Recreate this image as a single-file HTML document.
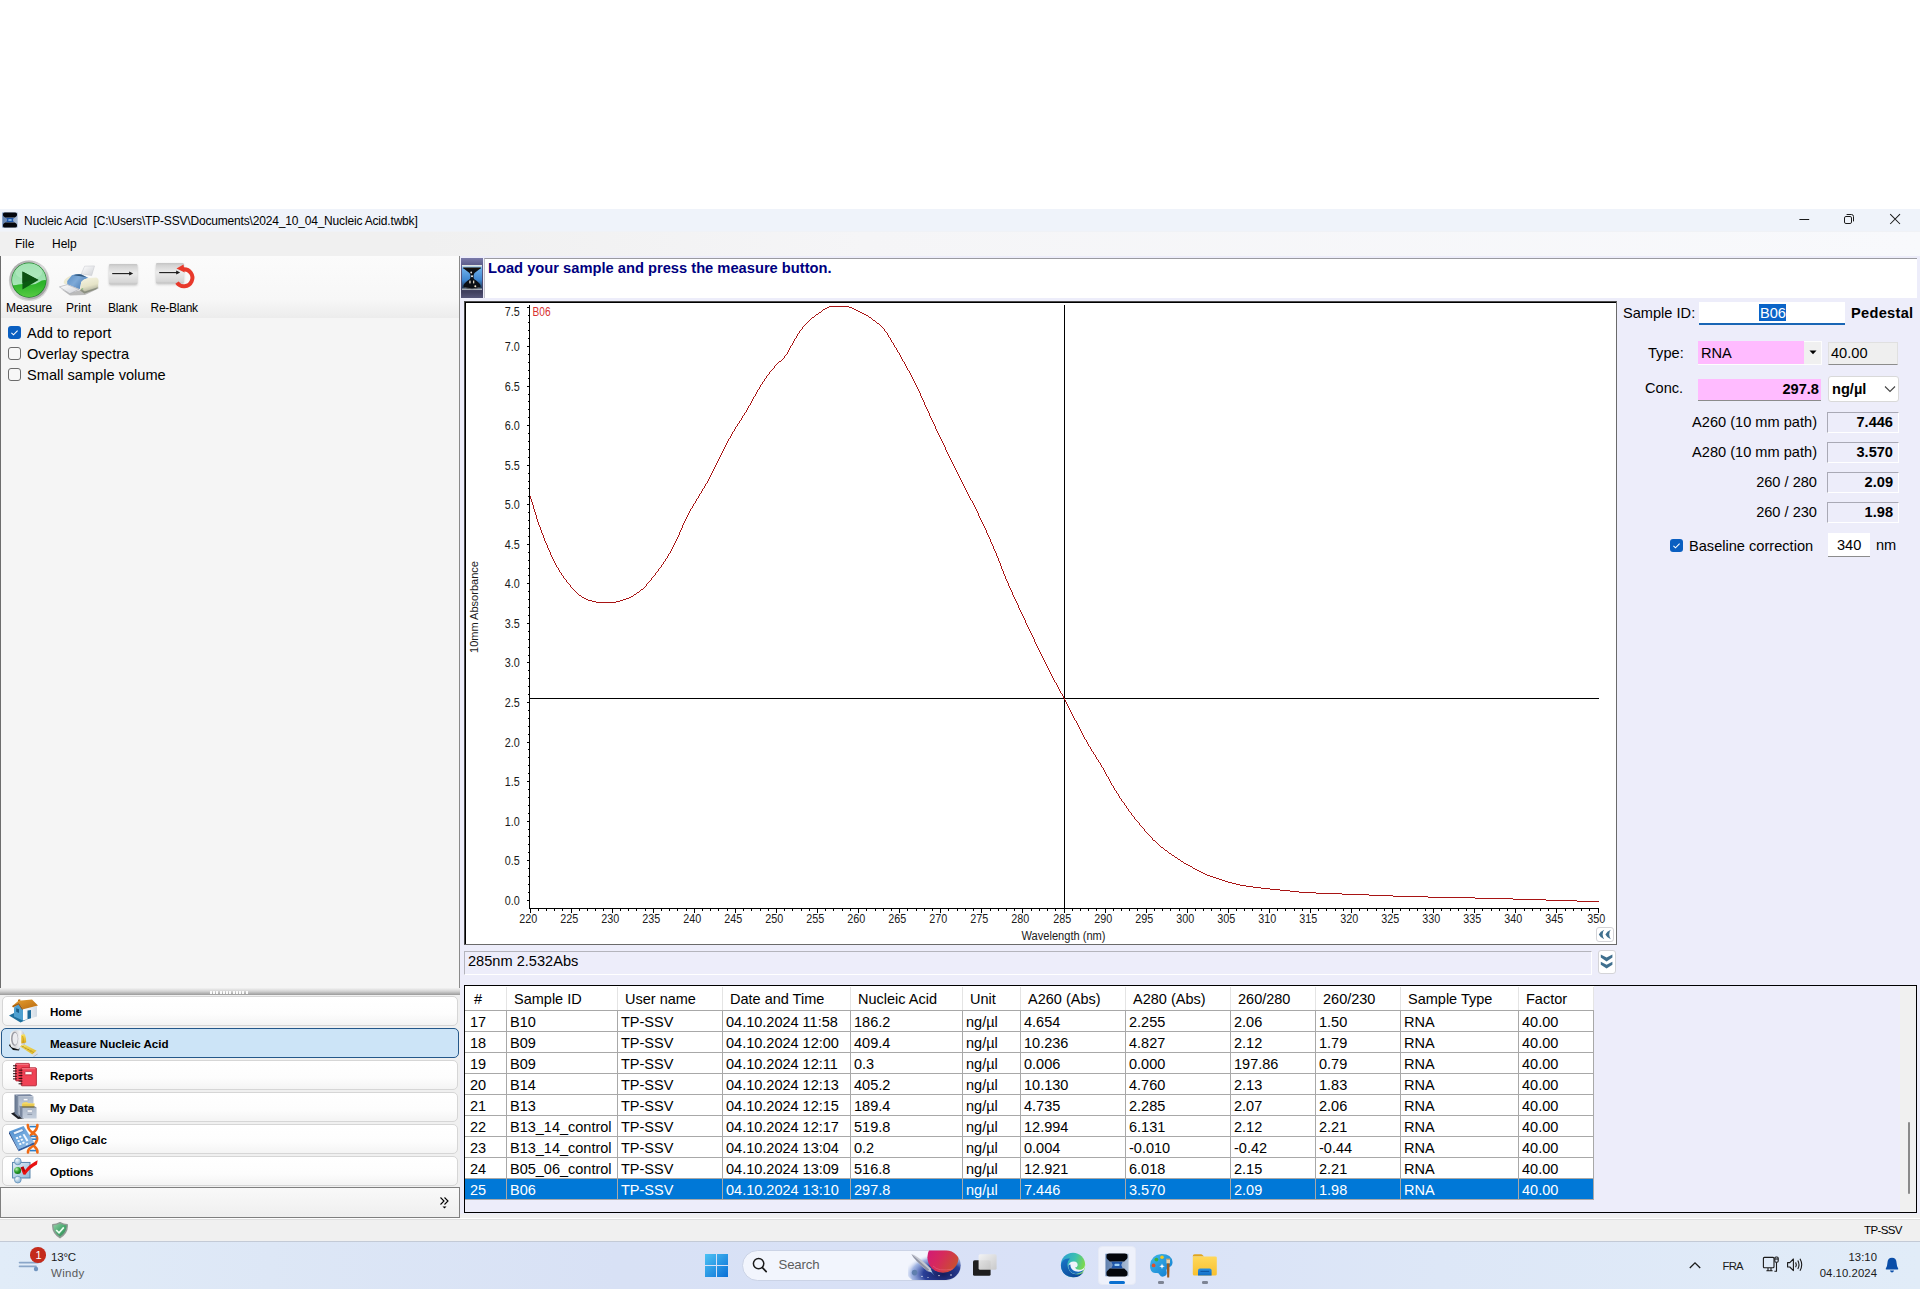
<!DOCTYPE html><html><head><meta charset="utf-8"><title>Nucleic Acid</title><style>
*{box-sizing:border-box;margin:0;padding:0}
html,body{width:1920px;height:1312px;overflow:hidden;background:#fff}
body{font-family:"Liberation Sans",sans-serif;font-size:14.6px;color:#000;position:relative}
.a{position:absolute}
.t{position:absolute;white-space:nowrap;line-height:1}
.ui{font-family:"Liberation Sans",sans-serif;font-size:12px}
.b{font-weight:bold}
.nav{position:absolute;left:2px;width:456px;height:30px;border:1px solid #d6d6d6;border-radius:5px;background:linear-gradient(#ffffff,#fdfdfd 60%,#f4f4f4)}
.nav.sel{background:#cce4f7;border:1px solid #24588a;left:1px;width:458px;height:30px}
.nav span{position:absolute;left:47px;top:8.5px;font-weight:bold;font-size:11.6px;white-space:nowrap;line-height:1;letter-spacing:-0.05px}
.nav.sel span{left:48px;top:8.5px}
.fld{position:absolute;background:#ededfa;border:1px solid #a9a9b5;border-right-color:#fff;border-bottom-color:#fff;text-align:right;font-weight:bold;line-height:1;white-space:nowrap}
.cell{position:absolute;white-space:nowrap;line-height:1;font-size:14.5px}
</style></head><body>
<div class="a" style="left:0;top:209px;width:1920px;height:23px;background:linear-gradient(#eff3fa 0,#eff3fa 22px,#f0f2f6 22px)"></div>
<div class="t ui" style="left:24px;top:215px;font-size:12px;letter-spacing:-0.18px">Nucleic Acid&nbsp; [C:\Users\TP-SSV\Documents\2024_10_04_Nucleic Acid.twbk]</div>
<div class="a" style="left:0;top:232px;width:1920px;height:24px;background:linear-gradient(90deg,#f0f0f0 0,#f0f0f0 22%,#f5f5f7 45%,#f8f9fc 100%)"></div>
<div class="t ui" style="left:15px;top:238px">File</div>
<div class="t ui" style="left:52px;top:238px">Help</div>
<div class="a" style="left:0;top:256px;width:459px;height:962px;background:#f5f5f5"></div>
<div class="a" style="left:0;top:256px;width:459px;height:62px;background:linear-gradient(#fbfbfb,#f7f7f7 70%,#ececec)"></div>
<div class="a" style="left:0;top:256px;width:1px;height:735px;background:#6d6d6d"></div>
<div class="a" style="left:459px;top:256px;width:1px;height:735px;background:#8a8a8a"></div>
<div class="t ui" style="left:6px;top:302px;letter-spacing:-0.1px">Measure</div>
<div class="t ui" style="left:66px;top:302px;letter-spacing:0.1px">Print</div>
<div class="t ui" style="left:108px;top:302px;letter-spacing:-0.15px">Blank</div>
<div class="t ui" style="left:150.5px;top:302px;letter-spacing:-0.25px">Re-Blank</div>
<div class="a" style="left:8px;top:326px;width:13px;height:13px;background:#0a5fc1;border-radius:3px"></div>
<svg class="a" style="left:8px;top:326px" width="13" height="13"><path d="M3.4 6.8 L5.5 8.8 L9.6 4.6" stroke="#fff" stroke-width="1.05" fill="none"/></svg>
<div class="t" style="left:27px;top:325.7px">Add to report</div>
<div class="a" style="left:8px;top:347px;width:13px;height:13px;background:#f7f7f7;border:1px solid #6b6b6b;border-radius:3px"></div>
<div class="t" style="left:27px;top:346.7px">Overlay spectra</div>
<div class="a" style="left:8px;top:368px;width:13px;height:13px;background:#f7f7f7;border:1px solid #6b6b6b;border-radius:3px"></div>
<div class="t" style="left:27px;top:367.7px">Small sample volume</div>
<div class="a" style="left:0;top:988px;width:460px;height:7px;background:linear-gradient(#f2f2f2,#d4d4d4 45%,#9a9a9a)"></div>
<div class="a" style="left:210px;top:991px;width:39px;height:3px;background:repeating-linear-gradient(90deg,#fafafa 0 2px,transparent 2px 3.25px)"></div>
<div class="a" style="left:0;top:995px;width:460px;height:223px;background:#f0f0f0"></div>
<div class="nav" style="top:996px"><span>Home</span></div>
<div class="nav sel" style="top:1028px"><span>Measure Nucleic Acid</span></div>
<div class="nav" style="top:1060px"><span>Reports</span></div>
<div class="nav" style="top:1092px"><span>My Data</span></div>
<div class="nav" style="top:1124px"><span>Oligo Calc</span></div>
<div class="nav" style="top:1156px"><span>Options</span></div>
<div class="a" style="left:0;top:1187px;width:460px;height:31px;background:linear-gradient(#f9f9f9,#efefef);border:1px solid #7f7f7f"></div>
<svg class="a" style="left:438px;top:1196px" width="14" height="14"><path d="M2.5 1.5 L6 5 L2.5 8.5 M6.5 1.5 L10 5 L6.5 8.5" stroke="#000" stroke-width="1.1" fill="none"/><path d="M4.5 10.5 h4 l-2 2z" fill="#000"/></svg>
<div class="a" style="left:460px;top:256px;width:1460px;height:962px;background:#f0f0f0"></div>
<div class="a" style="left:460px;top:256px;width:1460px;height:958px;background:#ededfa"></div>
<div class="a" style="left:484px;top:258px;width:1433px;height:40px;background:#fff;border-top:1px solid #9a9aa0;border-left:1px solid #c0c0c8"></div>
<div class="t b" style="left:488px;top:261px;color:#000080;font-size:14.7px">Load your sample and press the measure button.</div>
<div class="a" style="left:464px;top:301px;width:1153px;height:644px;background:#fff;border-top:1px solid #4a4a4a;border-left:1px solid #4a4a4a;border-right:1px solid #6a6a6a;border-bottom:1px solid #6a6a6a"></div>
<div class="a" style="left:465px;top:302px;width:1151px;height:642px;border-top:1px solid #000;border-left:1px solid #000"></div>
<svg class="a" style="left:0;top:0" width="1920" height="1312" font-family="Liberation Sans, sans-serif">
<g stroke="#000" stroke-width="1" shape-rendering="crispEdges">
<line x1="529.5" y1="305" x2="529.5" y2="908.5"/>
<line x1="529" y1="908.5" x2="1599" y2="908.5"/>
<line x1="527" y1="900.5" x2="529" y2="900.5"/>
<line x1="528" y1="892.5" x2="529" y2="892.5"/>
<line x1="528" y1="884.5" x2="529" y2="884.5"/>
<line x1="528" y1="876.5" x2="529" y2="876.5"/>
<line x1="528" y1="868.5" x2="529" y2="868.5"/>
<line x1="527" y1="860.5" x2="529" y2="860.5"/>
<line x1="528" y1="852.5" x2="529" y2="852.5"/>
<line x1="528" y1="844.5" x2="529" y2="844.5"/>
<line x1="528" y1="836.5" x2="529" y2="836.5"/>
<line x1="528" y1="829.5" x2="529" y2="829.5"/>
<line x1="527" y1="821.5" x2="529" y2="821.5"/>
<line x1="528" y1="813.5" x2="529" y2="813.5"/>
<line x1="528" y1="805.5" x2="529" y2="805.5"/>
<line x1="528" y1="797.5" x2="529" y2="797.5"/>
<line x1="528" y1="789.5" x2="529" y2="789.5"/>
<line x1="527" y1="781.5" x2="529" y2="781.5"/>
<line x1="528" y1="773.5" x2="529" y2="773.5"/>
<line x1="528" y1="765.5" x2="529" y2="765.5"/>
<line x1="528" y1="757.5" x2="529" y2="757.5"/>
<line x1="528" y1="749.5" x2="529" y2="749.5"/>
<line x1="527" y1="742.5" x2="529" y2="742.5"/>
<line x1="528" y1="734.5" x2="529" y2="734.5"/>
<line x1="528" y1="726.5" x2="529" y2="726.5"/>
<line x1="528" y1="718.5" x2="529" y2="718.5"/>
<line x1="528" y1="710.5" x2="529" y2="710.5"/>
<line x1="527" y1="702.5" x2="529" y2="702.5"/>
<line x1="528" y1="694.5" x2="529" y2="694.5"/>
<line x1="528" y1="686.5" x2="529" y2="686.5"/>
<line x1="528" y1="678.5" x2="529" y2="678.5"/>
<line x1="528" y1="670.5" x2="529" y2="670.5"/>
<line x1="527" y1="662.5" x2="529" y2="662.5"/>
<line x1="528" y1="655.5" x2="529" y2="655.5"/>
<line x1="528" y1="647.5" x2="529" y2="647.5"/>
<line x1="528" y1="639.5" x2="529" y2="639.5"/>
<line x1="528" y1="631.5" x2="529" y2="631.5"/>
<line x1="527" y1="623.5" x2="529" y2="623.5"/>
<line x1="528" y1="615.5" x2="529" y2="615.5"/>
<line x1="528" y1="607.5" x2="529" y2="607.5"/>
<line x1="528" y1="599.5" x2="529" y2="599.5"/>
<line x1="528" y1="591.5" x2="529" y2="591.5"/>
<line x1="527" y1="583.5" x2="529" y2="583.5"/>
<line x1="528" y1="575.5" x2="529" y2="575.5"/>
<line x1="528" y1="568.5" x2="529" y2="568.5"/>
<line x1="528" y1="560.5" x2="529" y2="560.5"/>
<line x1="528" y1="552.5" x2="529" y2="552.5"/>
<line x1="527" y1="544.5" x2="529" y2="544.5"/>
<line x1="528" y1="536.5" x2="529" y2="536.5"/>
<line x1="528" y1="528.5" x2="529" y2="528.5"/>
<line x1="528" y1="520.5" x2="529" y2="520.5"/>
<line x1="528" y1="512.5" x2="529" y2="512.5"/>
<line x1="527" y1="504.5" x2="529" y2="504.5"/>
<line x1="528" y1="496.5" x2="529" y2="496.5"/>
<line x1="528" y1="488.5" x2="529" y2="488.5"/>
<line x1="528" y1="481.5" x2="529" y2="481.5"/>
<line x1="528" y1="473.5" x2="529" y2="473.5"/>
<line x1="527" y1="465.5" x2="529" y2="465.5"/>
<line x1="528" y1="457.5" x2="529" y2="457.5"/>
<line x1="528" y1="449.5" x2="529" y2="449.5"/>
<line x1="528" y1="441.5" x2="529" y2="441.5"/>
<line x1="528" y1="433.5" x2="529" y2="433.5"/>
<line x1="527" y1="425.5" x2="529" y2="425.5"/>
<line x1="528" y1="417.5" x2="529" y2="417.5"/>
<line x1="528" y1="409.5" x2="529" y2="409.5"/>
<line x1="528" y1="401.5" x2="529" y2="401.5"/>
<line x1="528" y1="394.5" x2="529" y2="394.5"/>
<line x1="527" y1="386.5" x2="529" y2="386.5"/>
<line x1="528" y1="378.5" x2="529" y2="378.5"/>
<line x1="528" y1="370.5" x2="529" y2="370.5"/>
<line x1="528" y1="362.5" x2="529" y2="362.5"/>
<line x1="528" y1="354.5" x2="529" y2="354.5"/>
<line x1="527" y1="346.5" x2="529" y2="346.5"/>
<line x1="528" y1="338.5" x2="529" y2="338.5"/>
<line x1="528" y1="330.5" x2="529" y2="330.5"/>
<line x1="528" y1="322.5" x2="529" y2="322.5"/>
<line x1="528" y1="315.5" x2="529" y2="315.5"/>
<line x1="527" y1="307.5" x2="529" y2="307.5"/>
<line x1="530.5" y1="909" x2="530.5" y2="913"/>
<line x1="538.5" y1="909" x2="538.5" y2="911"/>
<line x1="546.5" y1="909" x2="546.5" y2="911"/>
<line x1="554.5" y1="909" x2="554.5" y2="911"/>
<line x1="562.5" y1="909" x2="562.5" y2="911"/>
<line x1="571.5" y1="909" x2="571.5" y2="913"/>
<line x1="579.5" y1="909" x2="579.5" y2="911"/>
<line x1="587.5" y1="909" x2="587.5" y2="911"/>
<line x1="595.5" y1="909" x2="595.5" y2="911"/>
<line x1="603.5" y1="909" x2="603.5" y2="911"/>
<line x1="612.5" y1="909" x2="612.5" y2="913"/>
<line x1="620.5" y1="909" x2="620.5" y2="911"/>
<line x1="628.5" y1="909" x2="628.5" y2="911"/>
<line x1="636.5" y1="909" x2="636.5" y2="911"/>
<line x1="645.5" y1="909" x2="645.5" y2="911"/>
<line x1="653.5" y1="909" x2="653.5" y2="913"/>
<line x1="661.5" y1="909" x2="661.5" y2="911"/>
<line x1="669.5" y1="909" x2="669.5" y2="911"/>
<line x1="677.5" y1="909" x2="677.5" y2="911"/>
<line x1="686.5" y1="909" x2="686.5" y2="911"/>
<line x1="694.5" y1="909" x2="694.5" y2="913"/>
<line x1="702.5" y1="909" x2="702.5" y2="911"/>
<line x1="710.5" y1="909" x2="710.5" y2="911"/>
<line x1="718.5" y1="909" x2="718.5" y2="911"/>
<line x1="727.5" y1="909" x2="727.5" y2="911"/>
<line x1="735.5" y1="909" x2="735.5" y2="913"/>
<line x1="743.5" y1="909" x2="743.5" y2="911"/>
<line x1="751.5" y1="909" x2="751.5" y2="911"/>
<line x1="760.5" y1="909" x2="760.5" y2="911"/>
<line x1="768.5" y1="909" x2="768.5" y2="911"/>
<line x1="776.5" y1="909" x2="776.5" y2="913"/>
<line x1="784.5" y1="909" x2="784.5" y2="911"/>
<line x1="792.5" y1="909" x2="792.5" y2="911"/>
<line x1="801.5" y1="909" x2="801.5" y2="911"/>
<line x1="809.5" y1="909" x2="809.5" y2="911"/>
<line x1="817.5" y1="909" x2="817.5" y2="913"/>
<line x1="825.5" y1="909" x2="825.5" y2="911"/>
<line x1="833.5" y1="909" x2="833.5" y2="911"/>
<line x1="842.5" y1="909" x2="842.5" y2="911"/>
<line x1="850.5" y1="909" x2="850.5" y2="911"/>
<line x1="858.5" y1="909" x2="858.5" y2="913"/>
<line x1="866.5" y1="909" x2="866.5" y2="911"/>
<line x1="875.5" y1="909" x2="875.5" y2="911"/>
<line x1="883.5" y1="909" x2="883.5" y2="911"/>
<line x1="891.5" y1="909" x2="891.5" y2="911"/>
<line x1="899.5" y1="909" x2="899.5" y2="913"/>
<line x1="907.5" y1="909" x2="907.5" y2="911"/>
<line x1="916.5" y1="909" x2="916.5" y2="911"/>
<line x1="924.5" y1="909" x2="924.5" y2="911"/>
<line x1="932.5" y1="909" x2="932.5" y2="911"/>
<line x1="940.5" y1="909" x2="940.5" y2="913"/>
<line x1="948.5" y1="909" x2="948.5" y2="911"/>
<line x1="957.5" y1="909" x2="957.5" y2="911"/>
<line x1="965.5" y1="909" x2="965.5" y2="911"/>
<line x1="973.5" y1="909" x2="973.5" y2="911"/>
<line x1="981.5" y1="909" x2="981.5" y2="913"/>
<line x1="990.5" y1="909" x2="990.5" y2="911"/>
<line x1="998.5" y1="909" x2="998.5" y2="911"/>
<line x1="1006.5" y1="909" x2="1006.5" y2="911"/>
<line x1="1014.5" y1="909" x2="1014.5" y2="911"/>
<line x1="1022.5" y1="909" x2="1022.5" y2="913"/>
<line x1="1031.5" y1="909" x2="1031.5" y2="911"/>
<line x1="1039.5" y1="909" x2="1039.5" y2="911"/>
<line x1="1047.5" y1="909" x2="1047.5" y2="911"/>
<line x1="1055.5" y1="909" x2="1055.5" y2="911"/>
<line x1="1064.5" y1="909" x2="1064.5" y2="913"/>
<line x1="1072.5" y1="909" x2="1072.5" y2="911"/>
<line x1="1080.5" y1="909" x2="1080.5" y2="911"/>
<line x1="1088.5" y1="909" x2="1088.5" y2="911"/>
<line x1="1096.5" y1="909" x2="1096.5" y2="911"/>
<line x1="1105.5" y1="909" x2="1105.5" y2="913"/>
<line x1="1113.5" y1="909" x2="1113.5" y2="911"/>
<line x1="1121.5" y1="909" x2="1121.5" y2="911"/>
<line x1="1129.5" y1="909" x2="1129.5" y2="911"/>
<line x1="1137.5" y1="909" x2="1137.5" y2="911"/>
<line x1="1146.5" y1="909" x2="1146.5" y2="913"/>
<line x1="1154.5" y1="909" x2="1154.5" y2="911"/>
<line x1="1162.5" y1="909" x2="1162.5" y2="911"/>
<line x1="1170.5" y1="909" x2="1170.5" y2="911"/>
<line x1="1179.5" y1="909" x2="1179.5" y2="911"/>
<line x1="1187.5" y1="909" x2="1187.5" y2="913"/>
<line x1="1195.5" y1="909" x2="1195.5" y2="911"/>
<line x1="1203.5" y1="909" x2="1203.5" y2="911"/>
<line x1="1211.5" y1="909" x2="1211.5" y2="911"/>
<line x1="1220.5" y1="909" x2="1220.5" y2="911"/>
<line x1="1228.5" y1="909" x2="1228.5" y2="913"/>
<line x1="1236.5" y1="909" x2="1236.5" y2="911"/>
<line x1="1244.5" y1="909" x2="1244.5" y2="911"/>
<line x1="1252.5" y1="909" x2="1252.5" y2="911"/>
<line x1="1261.5" y1="909" x2="1261.5" y2="911"/>
<line x1="1269.5" y1="909" x2="1269.5" y2="913"/>
<line x1="1277.5" y1="909" x2="1277.5" y2="911"/>
<line x1="1285.5" y1="909" x2="1285.5" y2="911"/>
<line x1="1294.5" y1="909" x2="1294.5" y2="911"/>
<line x1="1302.5" y1="909" x2="1302.5" y2="911"/>
<line x1="1310.5" y1="909" x2="1310.5" y2="913"/>
<line x1="1318.5" y1="909" x2="1318.5" y2="911"/>
<line x1="1326.5" y1="909" x2="1326.5" y2="911"/>
<line x1="1335.5" y1="909" x2="1335.5" y2="911"/>
<line x1="1343.5" y1="909" x2="1343.5" y2="911"/>
<line x1="1351.5" y1="909" x2="1351.5" y2="913"/>
<line x1="1359.5" y1="909" x2="1359.5" y2="911"/>
<line x1="1367.5" y1="909" x2="1367.5" y2="911"/>
<line x1="1376.5" y1="909" x2="1376.5" y2="911"/>
<line x1="1384.5" y1="909" x2="1384.5" y2="911"/>
<line x1="1392.5" y1="909" x2="1392.5" y2="913"/>
<line x1="1400.5" y1="909" x2="1400.5" y2="911"/>
<line x1="1409.5" y1="909" x2="1409.5" y2="911"/>
<line x1="1417.5" y1="909" x2="1417.5" y2="911"/>
<line x1="1425.5" y1="909" x2="1425.5" y2="911"/>
<line x1="1433.5" y1="909" x2="1433.5" y2="913"/>
<line x1="1441.5" y1="909" x2="1441.5" y2="911"/>
<line x1="1450.5" y1="909" x2="1450.5" y2="911"/>
<line x1="1458.5" y1="909" x2="1458.5" y2="911"/>
<line x1="1466.5" y1="909" x2="1466.5" y2="911"/>
<line x1="1474.5" y1="909" x2="1474.5" y2="913"/>
<line x1="1482.5" y1="909" x2="1482.5" y2="911"/>
<line x1="1491.5" y1="909" x2="1491.5" y2="911"/>
<line x1="1499.5" y1="909" x2="1499.5" y2="911"/>
<line x1="1507.5" y1="909" x2="1507.5" y2="911"/>
<line x1="1515.5" y1="909" x2="1515.5" y2="913"/>
<line x1="1524.5" y1="909" x2="1524.5" y2="911"/>
<line x1="1532.5" y1="909" x2="1532.5" y2="911"/>
<line x1="1540.5" y1="909" x2="1540.5" y2="911"/>
<line x1="1548.5" y1="909" x2="1548.5" y2="911"/>
<line x1="1556.5" y1="909" x2="1556.5" y2="913"/>
<line x1="1565.5" y1="909" x2="1565.5" y2="911"/>
<line x1="1573.5" y1="909" x2="1573.5" y2="911"/>
<line x1="1581.5" y1="909" x2="1581.5" y2="911"/>
<line x1="1589.5" y1="909" x2="1589.5" y2="911"/>
<line x1="1598.5" y1="909" x2="1598.5" y2="913"/>
<line x1="1064.5" y1="305" x2="1064.5" y2="908"/>
<line x1="530" y1="698.5" x2="1599" y2="698.5"/>
</g>
<g font-size="11.9px" fill="#1a1a1a">
<text x="504.8" y="904.9" textLength="15" lengthAdjust="spacingAndGlyphs">0.0</text>
<text x="504.8" y="864.9" textLength="15" lengthAdjust="spacingAndGlyphs">0.5</text>
<text x="504.8" y="825.9" textLength="15" lengthAdjust="spacingAndGlyphs">1.0</text>
<text x="504.8" y="785.9" textLength="15" lengthAdjust="spacingAndGlyphs">1.5</text>
<text x="504.8" y="746.9" textLength="15" lengthAdjust="spacingAndGlyphs">2.0</text>
<text x="504.8" y="706.9" textLength="15" lengthAdjust="spacingAndGlyphs">2.5</text>
<text x="504.8" y="666.9" textLength="15" lengthAdjust="spacingAndGlyphs">3.0</text>
<text x="504.8" y="627.9" textLength="15" lengthAdjust="spacingAndGlyphs">3.5</text>
<text x="504.8" y="587.9" textLength="15" lengthAdjust="spacingAndGlyphs">4.0</text>
<text x="504.8" y="548.9" textLength="15" lengthAdjust="spacingAndGlyphs">4.5</text>
<text x="504.8" y="508.9" textLength="15" lengthAdjust="spacingAndGlyphs">5.0</text>
<text x="504.8" y="469.9" textLength="15" lengthAdjust="spacingAndGlyphs">5.5</text>
<text x="504.8" y="429.9" textLength="15" lengthAdjust="spacingAndGlyphs">6.0</text>
<text x="504.8" y="390.9" textLength="15" lengthAdjust="spacingAndGlyphs">6.5</text>
<text x="504.8" y="350.9" textLength="15" lengthAdjust="spacingAndGlyphs">7.0</text>
<text x="504.8" y="315.8" textLength="15" lengthAdjust="spacingAndGlyphs">7.5</text>
<text x="519.3" y="923" textLength="18" lengthAdjust="spacingAndGlyphs">220</text>
<text x="560.3" y="923" textLength="18" lengthAdjust="spacingAndGlyphs">225</text>
<text x="601.3" y="923" textLength="18" lengthAdjust="spacingAndGlyphs">230</text>
<text x="642.3" y="923" textLength="18" lengthAdjust="spacingAndGlyphs">235</text>
<text x="683.3" y="923" textLength="18" lengthAdjust="spacingAndGlyphs">240</text>
<text x="724.3" y="923" textLength="18" lengthAdjust="spacingAndGlyphs">245</text>
<text x="765.3" y="923" textLength="18" lengthAdjust="spacingAndGlyphs">250</text>
<text x="806.3" y="923" textLength="18" lengthAdjust="spacingAndGlyphs">255</text>
<text x="847.3" y="923" textLength="18" lengthAdjust="spacingAndGlyphs">260</text>
<text x="888.3" y="923" textLength="18" lengthAdjust="spacingAndGlyphs">265</text>
<text x="929.3" y="923" textLength="18" lengthAdjust="spacingAndGlyphs">270</text>
<text x="970.3" y="923" textLength="18" lengthAdjust="spacingAndGlyphs">275</text>
<text x="1011.3" y="923" textLength="18" lengthAdjust="spacingAndGlyphs">280</text>
<text x="1053.3" y="923" textLength="18" lengthAdjust="spacingAndGlyphs">285</text>
<text x="1094.3" y="923" textLength="18" lengthAdjust="spacingAndGlyphs">290</text>
<text x="1135.3" y="923" textLength="18" lengthAdjust="spacingAndGlyphs">295</text>
<text x="1176.3" y="923" textLength="18" lengthAdjust="spacingAndGlyphs">300</text>
<text x="1217.3" y="923" textLength="18" lengthAdjust="spacingAndGlyphs">305</text>
<text x="1258.3" y="923" textLength="18" lengthAdjust="spacingAndGlyphs">310</text>
<text x="1299.3" y="923" textLength="18" lengthAdjust="spacingAndGlyphs">315</text>
<text x="1340.3" y="923" textLength="18" lengthAdjust="spacingAndGlyphs">320</text>
<text x="1381.3" y="923" textLength="18" lengthAdjust="spacingAndGlyphs">325</text>
<text x="1422.3" y="923" textLength="18" lengthAdjust="spacingAndGlyphs">330</text>
<text x="1463.3" y="923" textLength="18" lengthAdjust="spacingAndGlyphs">335</text>
<text x="1504.3" y="923" textLength="18" lengthAdjust="spacingAndGlyphs">340</text>
<text x="1545.3" y="923" textLength="18" lengthAdjust="spacingAndGlyphs">345</text>
<text x="1587.3" y="923" textLength="18" lengthAdjust="spacingAndGlyphs">350</text>
<text x="1063.5" y="940" text-anchor="middle" font-size="12px" textLength="84" lengthAdjust="spacingAndGlyphs">Wavelength (nm)</text>
<text transform="translate(478,653) rotate(-90)" font-size="11.5px" textLength="92" lengthAdjust="spacingAndGlyphs">10mm Absorbance</text>
<text x="532.6" y="315.8" fill="#d83030" font-size="11.9px" textLength="18" lengthAdjust="spacingAndGlyphs">B06</text>
</g>
<path d="M530 496h1v3h-1zM531 499h1v3h-1zM532 502h1v3h-1zM533 505h1v4h-1zM534 509h1v3h-1zM535 512h1v3h-1zM536 515h1v4h-1zM537 519h1v3h-1zM538 522h1v3h-1zM539 525h1v2h-1zM540 527h1v3h-1zM541 530h1v3h-1zM542 533h1v2h-1zM543 535h1v3h-1zM544 538h1v3h-1zM545 541h1v2h-1zM546 543h1v2h-1zM547 545h1v3h-1zM548 548h1v2h-1zM549 550h1v2h-1zM550 552h1v3h-1zM551 555h1v2h-1zM552 557h1v2h-1zM553 559h1v2h-1zM554 561h1v2h-1zM555 563h1v2h-1zM556 565h1v2h-1zM557 567h1v1h-1zM558 568h1v2h-1zM559 570h1v2h-1zM560 572h1v1h-1zM561 573h1v2h-1zM562 575h1v1h-1zM563 576h1v2h-1zM564 578h1v1h-1zM565 579h1v1h-1zM566 580h1v2h-1zM567 582h1v1h-1zM568 583h1v1h-1zM569 584h1v1h-1zM570 585h1v2h-1zM571 587h1v1h-1zM572 588h1v1h-1zM573 589h1v1h-1zM574 590h1v1h-1zM575 591h1v1h-1zM576 592h1v1h-1zM577 593h1v1h-1zM578 594h1v1h-1zM579 595h1v1h-1zM580 595h1v1h-1zM581 596h1v1h-1zM582 597h1v1h-1zM583 597h1v1h-1zM584 598h1v1h-1zM585 598h1v1h-1zM586 599h1v1h-1zM587 599h1v1h-1zM588 600h1v1h-1zM589 600h1v1h-1zM590 600h1v1h-1zM591 600h1v1h-1zM592 601h1v1h-1zM593 601h1v1h-1zM594 601h1v1h-1zM595 601h1v1h-1zM596 602h1v1h-1zM597 602h1v1h-1zM598 602h1v1h-1zM599 602h1v1h-1zM600 602h1v1h-1zM601 602h1v1h-1zM602 602h1v1h-1zM603 602h1v1h-1zM604 602h1v1h-1zM605 602h1v1h-1zM606 602h1v1h-1zM607 602h1v1h-1zM608 602h1v1h-1zM609 602h1v1h-1zM610 602h1v1h-1zM611 602h1v1h-1zM612 602h1v1h-1zM613 602h1v1h-1zM614 602h1v1h-1zM615 602h1v1h-1zM616 601h1v1h-1zM617 601h1v1h-1zM618 601h1v1h-1zM619 601h1v1h-1zM620 600h1v1h-1zM621 600h1v1h-1zM622 600h1v1h-1zM623 599h1v1h-1zM624 599h1v1h-1zM625 599h1v1h-1zM626 598h1v1h-1zM627 598h1v1h-1zM628 598h1v1h-1zM629 597h1v1h-1zM630 597h1v1h-1zM631 596h1v1h-1zM632 596h1v1h-1zM633 595h1v1h-1zM634 594h1v1h-1zM635 594h1v1h-1zM636 593h1v1h-1zM637 592h1v1h-1zM638 592h1v1h-1zM639 591h1v1h-1zM640 590h1v1h-1zM641 589h1v1h-1zM642 589h1v1h-1zM643 588h1v1h-1zM644 587h1v1h-1zM645 586h1v1h-1zM646 584h1v2h-1zM647 583h1v1h-1zM648 582h1v1h-1zM649 581h1v1h-1zM650 580h1v1h-1zM651 578h1v2h-1zM652 577h1v1h-1zM653 576h1v1h-1zM654 575h1v1h-1zM655 573h1v2h-1zM656 572h1v1h-1zM657 571h1v1h-1zM658 569h1v2h-1zM659 568h1v1h-1zM660 567h1v1h-1zM661 565h1v2h-1zM662 564h1v1h-1zM663 562h1v2h-1zM664 561h1v1h-1zM665 559h1v2h-1zM666 558h1v1h-1zM667 556h1v2h-1zM668 554h1v2h-1zM669 553h1v1h-1zM670 551h1v2h-1zM671 549h1v2h-1zM672 547h1v2h-1zM673 545h1v2h-1zM674 543h1v2h-1zM675 541h1v2h-1zM676 539h1v2h-1zM677 537h1v2h-1zM678 535h1v2h-1zM679 532h1v3h-1zM680 530h1v2h-1zM681 528h1v2h-1zM682 525h1v3h-1zM683 523h1v2h-1zM684 521h1v2h-1zM685 519h1v2h-1zM686 517h1v2h-1zM687 515h1v2h-1zM688 513h1v2h-1zM689 511h1v2h-1zM690 509h1v2h-1zM691 508h1v1h-1zM692 506h1v2h-1zM693 504h1v2h-1zM694 503h1v1h-1zM695 501h1v2h-1zM696 499h1v2h-1zM697 498h1v1h-1zM698 496h1v2h-1zM699 494h1v2h-1zM700 493h1v1h-1zM701 491h1v2h-1zM702 489h1v2h-1zM703 488h1v1h-1zM704 486h1v2h-1zM705 484h1v2h-1zM706 483h1v1h-1zM707 481h1v2h-1zM708 479h1v2h-1zM709 477h1v2h-1zM710 475h1v2h-1zM711 473h1v2h-1zM712 471h1v2h-1zM713 469h1v2h-1zM714 467h1v2h-1zM715 465h1v2h-1zM716 463h1v2h-1zM717 461h1v2h-1zM718 459h1v2h-1zM719 457h1v2h-1zM720 455h1v2h-1zM721 453h1v2h-1zM722 451h1v2h-1zM723 449h1v2h-1zM724 447h1v2h-1zM725 445h1v2h-1zM726 443h1v2h-1zM727 441h1v2h-1zM728 439h1v2h-1zM729 438h1v1h-1zM730 436h1v2h-1zM731 434h1v2h-1zM732 432h1v2h-1zM733 431h1v1h-1zM734 429h1v2h-1zM735 427h1v2h-1zM736 426h1v1h-1zM737 424h1v2h-1zM738 423h1v1h-1zM739 421h1v2h-1zM740 420h1v1h-1zM741 418h1v2h-1zM742 416h1v2h-1zM743 415h1v1h-1zM744 413h1v2h-1zM745 412h1v1h-1zM746 410h1v2h-1zM747 408h1v2h-1zM748 406h1v2h-1zM749 405h1v1h-1zM750 403h1v2h-1zM751 401h1v2h-1zM752 399h1v2h-1zM753 397h1v2h-1zM754 396h1v1h-1zM755 394h1v2h-1zM756 392h1v2h-1zM757 390h1v2h-1zM758 389h1v1h-1zM759 387h1v2h-1zM760 385h1v2h-1zM761 384h1v1h-1zM762 382h1v2h-1zM763 381h1v1h-1zM764 379h1v2h-1zM765 378h1v1h-1zM766 376h1v2h-1zM767 375h1v1h-1zM768 374h1v1h-1zM769 372h1v2h-1zM770 371h1v1h-1zM771 370h1v1h-1zM772 369h1v1h-1zM773 368h1v1h-1zM774 366h1v2h-1zM775 365h1v1h-1zM776 364h1v1h-1zM777 363h1v1h-1zM778 362h1v1h-1zM779 361h1v1h-1zM780 361h1v1h-1zM781 360h1v1h-1zM782 359h1v1h-1zM783 358h1v1h-1zM784 356h1v2h-1zM785 355h1v1h-1zM786 354h1v1h-1zM787 352h1v2h-1zM788 350h1v2h-1zM789 348h1v2h-1zM790 346h1v2h-1zM791 345h1v1h-1zM792 343h1v2h-1zM793 341h1v2h-1zM794 339h1v2h-1zM795 338h1v1h-1zM796 336h1v2h-1zM797 334h1v2h-1zM798 333h1v1h-1zM799 331h1v2h-1zM800 330h1v1h-1zM801 329h1v1h-1zM802 327h1v2h-1zM803 326h1v1h-1zM804 325h1v1h-1zM805 324h1v1h-1zM806 323h1v1h-1zM807 322h1v1h-1zM808 321h1v1h-1zM809 320h1v1h-1zM810 319h1v1h-1zM811 318h1v1h-1zM812 317h1v1h-1zM813 317h1v1h-1zM814 316h1v1h-1zM815 315h1v1h-1zM816 314h1v1h-1zM817 314h1v1h-1zM818 313h1v1h-1zM819 312h1v1h-1zM820 312h1v1h-1zM821 311h1v1h-1zM822 310h1v1h-1zM823 309h1v1h-1zM824 309h1v1h-1zM825 308h1v1h-1zM826 308h1v1h-1zM827 307h1v1h-1zM828 307h1v1h-1zM829 306h1v1h-1zM830 306h1v1h-1zM831 306h1v1h-1zM832 306h1v1h-1zM833 306h1v1h-1zM834 306h1v1h-1zM835 306h1v1h-1zM836 306h1v1h-1zM837 306h1v1h-1zM838 306h1v1h-1zM839 306h1v1h-1zM840 306h1v1h-1zM841 306h1v1h-1zM842 306h1v1h-1zM843 306h1v1h-1zM844 306h1v1h-1zM845 306h1v1h-1zM846 306h1v1h-1zM847 306h1v1h-1zM848 306h1v1h-1zM849 307h1v1h-1zM850 307h1v1h-1zM851 307h1v1h-1zM852 308h1v1h-1zM853 308h1v1h-1zM854 309h1v1h-1zM855 309h1v1h-1zM856 310h1v1h-1zM857 310h1v1h-1zM858 311h1v1h-1zM859 311h1v1h-1zM860 312h1v1h-1zM861 312h1v1h-1zM862 313h1v1h-1zM863 313h1v1h-1zM864 314h1v1h-1zM865 314h1v1h-1zM866 315h1v1h-1zM867 315h1v1h-1zM868 316h1v1h-1zM869 317h1v1h-1zM870 317h1v1h-1zM871 318h1v1h-1zM872 319h1v1h-1zM873 320h1v1h-1zM874 320h1v1h-1zM875 321h1v1h-1zM876 322h1v1h-1zM877 323h1v1h-1zM878 323h1v1h-1zM879 324h1v1h-1zM880 325h1v1h-1zM881 326h1v1h-1zM882 327h1v1h-1zM883 328h1v1h-1zM884 329h1v2h-1zM885 331h1v1h-1zM886 332h1v1h-1zM887 333h1v2h-1zM888 335h1v2h-1zM889 337h1v1h-1zM890 338h1v2h-1zM891 340h1v2h-1zM892 342h1v1h-1zM893 343h1v2h-1zM894 345h1v2h-1zM895 347h1v1h-1zM896 348h1v2h-1zM897 350h1v2h-1zM898 352h1v1h-1zM899 353h1v2h-1zM900 355h1v2h-1zM901 357h1v2h-1zM902 359h1v2h-1zM903 361h1v1h-1zM904 362h1v2h-1zM905 364h1v2h-1zM906 366h1v2h-1zM907 368h1v2h-1zM908 370h1v1h-1zM909 371h1v2h-1zM910 373h1v2h-1zM911 375h1v2h-1zM912 377h1v2h-1zM913 379h1v2h-1zM914 381h1v2h-1zM915 383h1v2h-1zM916 385h1v2h-1zM917 387h1v2h-1zM918 389h1v2h-1zM919 391h1v2h-1zM920 393h1v3h-1zM921 396h1v2h-1zM922 398h1v2h-1zM923 400h1v2h-1zM924 402h1v3h-1zM925 405h1v2h-1zM926 407h1v2h-1zM927 409h1v2h-1zM928 411h1v2h-1zM929 413h1v3h-1zM930 416h1v2h-1zM931 418h1v2h-1zM932 420h1v2h-1zM933 422h1v2h-1zM934 424h1v2h-1zM935 426h1v3h-1zM936 429h1v2h-1zM937 431h1v2h-1zM938 433h1v2h-1zM939 435h1v2h-1zM940 437h1v2h-1zM941 439h1v2h-1zM942 441h1v2h-1zM943 443h1v2h-1zM944 445h1v2h-1zM945 447h1v3h-1zM946 450h1v2h-1zM947 452h1v2h-1zM948 454h1v2h-1zM949 456h1v2h-1zM950 458h1v2h-1zM951 460h1v2h-1zM952 462h1v2h-1zM953 464h1v2h-1zM954 466h1v2h-1zM955 468h1v2h-1zM956 470h1v2h-1zM957 472h1v2h-1zM958 474h1v2h-1zM959 476h1v2h-1zM960 478h1v2h-1zM961 480h1v2h-1zM962 482h1v2h-1zM963 484h1v2h-1zM964 486h1v2h-1zM965 488h1v2h-1zM966 490h1v2h-1zM967 492h1v2h-1zM968 494h1v2h-1zM969 496h1v2h-1zM970 498h1v2h-1zM971 500h1v1h-1zM972 501h1v2h-1zM973 503h1v2h-1zM974 505h1v2h-1zM975 507h1v2h-1zM976 509h1v2h-1zM977 511h1v2h-1zM978 513h1v3h-1zM979 516h1v2h-1zM980 518h1v2h-1zM981 520h1v2h-1zM982 522h1v2h-1zM983 524h1v2h-1zM984 526h1v2h-1zM985 528h1v2h-1zM986 530h1v3h-1zM987 533h1v2h-1zM988 535h1v2h-1zM989 537h1v2h-1zM990 539h1v3h-1zM991 542h1v2h-1zM992 544h1v2h-1zM993 546h1v3h-1zM994 549h1v2h-1zM995 551h1v2h-1zM996 553h1v3h-1zM997 556h1v2h-1zM998 558h1v3h-1zM999 561h1v2h-1zM1000 563h1v3h-1zM1001 566h1v3h-1zM1002 569h1v2h-1zM1003 571h1v3h-1zM1004 574h1v2h-1zM1005 576h1v3h-1zM1006 579h1v2h-1zM1007 581h1v2h-1zM1008 583h1v3h-1zM1009 586h1v2h-1zM1010 588h1v2h-1zM1011 590h1v2h-1zM1012 592h1v3h-1zM1013 595h1v2h-1zM1014 597h1v2h-1zM1015 599h1v2h-1zM1016 601h1v2h-1zM1017 603h1v2h-1zM1018 605h1v3h-1zM1019 608h1v2h-1zM1020 610h1v2h-1zM1021 612h1v2h-1zM1022 614h1v2h-1zM1023 616h1v2h-1zM1024 618h1v2h-1zM1025 620h1v3h-1zM1026 623h1v2h-1zM1027 625h1v2h-1zM1028 627h1v2h-1zM1029 629h1v2h-1zM1030 631h1v2h-1zM1031 633h1v2h-1zM1032 635h1v2h-1zM1033 637h1v2h-1zM1034 639h1v3h-1zM1035 642h1v2h-1zM1036 644h1v2h-1zM1037 646h1v2h-1zM1038 648h1v2h-1zM1039 650h1v2h-1zM1040 652h1v2h-1zM1041 654h1v2h-1zM1042 656h1v2h-1zM1043 658h1v2h-1zM1044 660h1v2h-1zM1045 662h1v2h-1zM1046 664h1v2h-1zM1047 666h1v2h-1zM1048 668h1v2h-1zM1049 670h1v2h-1zM1050 672h1v2h-1zM1051 674h1v2h-1zM1052 676h1v2h-1zM1053 678h1v2h-1zM1054 680h1v2h-1zM1055 682h1v1h-1zM1056 683h1v2h-1zM1057 685h1v2h-1zM1058 687h1v2h-1zM1059 689h1v2h-1zM1060 691h1v2h-1zM1061 693h1v1h-1zM1062 694h1v2h-1zM1063 696h1v2h-1zM1064 698h1v2h-1zM1065 700h1v2h-1zM1066 702h1v2h-1zM1067 704h1v2h-1zM1068 706h1v2h-1zM1069 708h1v2h-1zM1070 710h1v2h-1zM1071 712h1v2h-1zM1072 714h1v2h-1zM1073 716h1v2h-1zM1074 718h1v2h-1zM1075 720h1v1h-1zM1076 721h1v2h-1zM1077 723h1v2h-1zM1078 725h1v2h-1zM1079 727h1v2h-1zM1080 729h1v2h-1zM1081 731h1v2h-1zM1082 733h1v2h-1zM1083 735h1v2h-1zM1084 737h1v2h-1zM1085 739h1v1h-1zM1086 740h1v2h-1zM1087 742h1v2h-1zM1088 744h1v2h-1zM1089 746h1v1h-1zM1090 747h1v2h-1zM1091 749h1v2h-1zM1092 751h1v1h-1zM1093 752h1v2h-1zM1094 754h1v1h-1zM1095 755h1v2h-1zM1096 757h1v2h-1zM1097 759h1v1h-1zM1098 760h1v2h-1zM1099 762h1v1h-1zM1100 763h1v2h-1zM1101 765h1v2h-1zM1102 767h1v1h-1zM1103 768h1v2h-1zM1104 770h1v2h-1zM1105 772h1v2h-1zM1106 774h1v2h-1zM1107 776h1v1h-1zM1108 777h1v2h-1zM1109 779h1v2h-1zM1110 781h1v2h-1zM1111 783h1v2h-1zM1112 785h1v1h-1zM1113 786h1v2h-1zM1114 788h1v2h-1zM1115 790h1v1h-1zM1116 791h1v2h-1zM1117 793h1v1h-1zM1118 794h1v2h-1zM1119 796h1v2h-1zM1120 798h1v1h-1zM1121 799h1v2h-1zM1122 801h1v1h-1zM1123 802h1v1h-1zM1124 803h1v2h-1zM1125 805h1v1h-1zM1126 806h1v2h-1zM1127 808h1v1h-1zM1128 809h1v2h-1zM1129 811h1v1h-1zM1130 812h1v1h-1zM1131 813h1v2h-1zM1132 815h1v1h-1zM1133 816h1v1h-1zM1134 817h1v2h-1zM1135 819h1v1h-1zM1136 820h1v1h-1zM1137 821h1v1h-1zM1138 822h1v1h-1zM1139 823h1v2h-1zM1140 825h1v1h-1zM1141 826h1v1h-1zM1142 827h1v1h-1zM1143 828h1v1h-1zM1144 829h1v2h-1zM1145 831h1v1h-1zM1146 832h1v1h-1zM1147 833h1v1h-1zM1148 834h1v1h-1zM1149 835h1v1h-1zM1150 836h1v1h-1zM1151 837h1v1h-1zM1152 838h1v2h-1zM1153 840h1v1h-1zM1154 840h1v1h-1zM1155 841h1v1h-1zM1156 842h1v1h-1zM1157 843h1v1h-1zM1158 844h1v1h-1zM1159 845h1v1h-1zM1160 846h1v1h-1zM1161 847h1v1h-1zM1162 847h1v1h-1zM1163 848h1v1h-1zM1164 849h1v1h-1zM1165 850h1v1h-1zM1166 850h1v1h-1zM1167 851h1v1h-1zM1168 852h1v1h-1zM1169 853h1v1h-1zM1170 853h1v1h-1zM1171 854h1v1h-1zM1172 855h1v1h-1zM1173 855h1v1h-1zM1174 856h1v1h-1zM1175 857h1v1h-1zM1176 857h1v1h-1zM1177 858h1v1h-1zM1178 859h1v1h-1zM1179 859h1v1h-1zM1180 860h1v1h-1zM1181 861h1v1h-1zM1182 861h1v1h-1zM1183 862h1v1h-1zM1184 863h1v1h-1zM1185 863h1v1h-1zM1186 864h1v1h-1zM1187 864h1v1h-1zM1188 865h1v1h-1zM1189 865h1v1h-1zM1190 866h1v1h-1zM1191 866h1v1h-1zM1192 867h1v1h-1zM1193 868h1v1h-1zM1194 868h1v1h-1zM1195 869h1v1h-1zM1196 869h1v1h-1zM1197 870h1v1h-1zM1198 870h1v1h-1zM1199 871h1v1h-1zM1200 871h1v1h-1zM1201 872h1v1h-1zM1202 872h1v1h-1zM1203 873h1v1h-1zM1204 873h1v1h-1zM1205 874h1v1h-1zM1206 874h1v1h-1zM1207 875h1v1h-1zM1208 875h1v1h-1zM1209 875h1v1h-1zM1210 876h1v1h-1zM1211 876h1v1h-1zM1212 876h1v1h-1zM1213 877h1v1h-1zM1214 877h1v1h-1zM1215 877h1v1h-1zM1216 878h1v1h-1zM1217 878h1v1h-1zM1218 878h1v1h-1zM1219 879h1v1h-1zM1220 879h1v1h-1zM1221 879h1v1h-1zM1222 880h1v1h-1zM1223 880h1v1h-1zM1224 880h1v1h-1zM1225 881h1v1h-1zM1226 881h1v1h-1zM1227 881h1v1h-1zM1228 882h1v1h-1zM1229 882h1v1h-1zM1230 882h1v1h-1zM1231 882h1v1h-1zM1232 883h1v1h-1zM1233 883h1v1h-1zM1234 883h1v1h-1zM1235 883h1v1h-1zM1236 884h1v1h-1zM1237 884h1v1h-1zM1238 884h1v1h-1zM1239 884h1v1h-1zM1240 885h1v1h-1zM1241 885h1v1h-1zM1242 885h1v1h-1zM1243 885h1v1h-1zM1244 885h1v1h-1zM1245 885h1v1h-1zM1246 886h1v1h-1zM1247 886h1v1h-1zM1248 886h1v1h-1zM1249 886h1v1h-1zM1250 886h1v1h-1zM1251 886h1v1h-1zM1252 886h1v1h-1zM1253 887h1v1h-1zM1254 887h1v1h-1zM1255 887h1v1h-1zM1256 887h1v1h-1zM1257 887h1v1h-1zM1258 887h1v1h-1zM1259 887h1v1h-1zM1260 887h1v1h-1zM1261 888h1v1h-1zM1262 888h1v1h-1zM1263 888h1v1h-1zM1264 888h1v1h-1zM1265 888h1v1h-1zM1266 888h1v1h-1zM1267 888h1v1h-1zM1268 888h1v1h-1zM1269 888h1v1h-1zM1270 889h1v1h-1zM1271 889h1v1h-1zM1272 889h1v1h-1zM1273 889h1v1h-1zM1274 889h1v1h-1zM1275 889h1v1h-1zM1276 889h1v1h-1zM1277 889h1v1h-1zM1278 889h1v1h-1zM1279 889h1v1h-1zM1280 890h1v1h-1zM1281 890h1v1h-1zM1282 890h1v1h-1zM1283 890h1v1h-1zM1284 890h1v1h-1zM1285 890h1v1h-1zM1286 890h1v1h-1zM1287 890h1v1h-1zM1288 890h1v1h-1zM1289 890h1v1h-1zM1290 891h1v1h-1zM1291 891h1v1h-1zM1292 891h1v1h-1zM1293 891h1v1h-1zM1294 891h1v1h-1zM1295 891h1v1h-1zM1296 891h1v1h-1zM1297 891h1v1h-1zM1298 891h1v1h-1zM1299 892h1v1h-1zM1300 892h1v1h-1zM1301 892h1v1h-1zM1302 892h1v1h-1zM1303 892h1v1h-1zM1304 892h1v1h-1zM1305 892h1v1h-1zM1306 892h1v1h-1zM1307 892h1v1h-1zM1308 892h1v1h-1zM1309 892h1v1h-1zM1310 892h1v1h-1zM1311 892h1v1h-1zM1312 892h1v1h-1zM1313 892h1v1h-1zM1314 892h1v1h-1zM1315 892h1v1h-1zM1316 893h1v1h-1zM1317 893h1v1h-1zM1318 893h1v1h-1zM1319 893h1v1h-1zM1320 893h1v1h-1zM1321 893h1v1h-1zM1322 893h1v1h-1zM1323 893h1v1h-1zM1324 893h1v1h-1zM1325 893h1v1h-1zM1326 893h1v1h-1zM1327 893h1v1h-1zM1328 893h1v1h-1zM1329 893h1v1h-1zM1330 893h1v1h-1zM1331 893h1v1h-1zM1332 893h1v1h-1zM1333 893h1v1h-1zM1334 893h1v1h-1zM1335 893h1v1h-1zM1336 893h1v1h-1zM1337 893h1v1h-1zM1338 893h1v1h-1zM1339 893h1v1h-1zM1340 893h1v1h-1zM1341 893h1v1h-1zM1342 894h1v1h-1zM1343 894h1v1h-1zM1344 894h1v1h-1zM1345 894h1v1h-1zM1346 894h1v1h-1zM1347 894h1v1h-1zM1348 894h1v1h-1zM1349 894h1v1h-1zM1350 894h1v1h-1zM1351 894h1v1h-1zM1352 894h1v1h-1zM1353 894h1v1h-1zM1354 894h1v1h-1zM1355 894h1v1h-1zM1356 894h1v1h-1zM1357 894h1v1h-1zM1358 894h1v1h-1zM1359 894h1v1h-1zM1360 894h1v1h-1zM1361 894h1v1h-1zM1362 894h1v1h-1zM1363 894h1v1h-1zM1364 894h1v1h-1zM1365 894h1v1h-1zM1366 894h1v1h-1zM1367 894h1v1h-1zM1368 894h1v1h-1zM1369 895h1v1h-1zM1370 895h1v1h-1zM1371 895h1v1h-1zM1372 895h1v1h-1zM1373 895h1v1h-1zM1374 895h1v1h-1zM1375 895h1v1h-1zM1376 895h1v1h-1zM1377 895h1v1h-1zM1378 895h1v1h-1zM1379 895h1v1h-1zM1380 895h1v1h-1zM1381 895h1v1h-1zM1382 895h1v1h-1zM1383 895h1v1h-1zM1384 895h1v1h-1zM1385 895h1v1h-1zM1386 895h1v1h-1zM1387 895h1v1h-1zM1388 895h1v1h-1zM1389 895h1v1h-1zM1390 895h1v1h-1zM1391 895h1v1h-1zM1392 895h1v1h-1zM1393 896h1v1h-1zM1394 896h1v1h-1zM1395 896h1v1h-1zM1396 896h1v1h-1zM1397 896h1v1h-1zM1398 896h1v1h-1zM1399 896h1v1h-1zM1400 896h1v1h-1zM1401 896h1v1h-1zM1402 896h1v1h-1zM1403 896h1v1h-1zM1404 896h1v1h-1zM1405 896h1v1h-1zM1406 896h1v1h-1zM1407 896h1v1h-1zM1408 896h1v1h-1zM1409 896h1v1h-1zM1410 896h1v1h-1zM1411 896h1v1h-1zM1412 896h1v1h-1zM1413 896h1v1h-1zM1414 896h1v1h-1zM1415 896h1v1h-1zM1416 896h1v1h-1zM1417 896h1v1h-1zM1418 896h1v1h-1zM1419 896h1v1h-1zM1420 896h1v1h-1zM1421 896h1v1h-1zM1422 896h1v1h-1zM1423 896h1v1h-1zM1424 896h1v1h-1zM1425 896h1v1h-1zM1426 896h1v1h-1zM1427 896h1v1h-1zM1428 897h1v1h-1zM1429 897h1v1h-1zM1430 897h1v1h-1zM1431 897h1v1h-1zM1432 897h1v1h-1zM1433 897h1v1h-1zM1434 897h1v1h-1zM1435 897h1v1h-1zM1436 897h1v1h-1zM1437 897h1v1h-1zM1438 897h1v1h-1zM1439 897h1v1h-1zM1440 897h1v1h-1zM1441 897h1v1h-1zM1442 897h1v1h-1zM1443 897h1v1h-1zM1444 897h1v1h-1zM1445 897h1v1h-1zM1446 897h1v1h-1zM1447 897h1v1h-1zM1448 897h1v1h-1zM1449 897h1v1h-1zM1450 897h1v1h-1zM1451 897h1v1h-1zM1452 897h1v1h-1zM1453 897h1v1h-1zM1454 897h1v1h-1zM1455 897h1v1h-1zM1456 897h1v1h-1zM1457 897h1v1h-1zM1458 897h1v1h-1zM1459 897h1v1h-1zM1460 897h1v1h-1zM1461 897h1v1h-1zM1462 897h1v1h-1zM1463 897h1v1h-1zM1464 897h1v1h-1zM1465 897h1v1h-1zM1466 897h1v1h-1zM1467 897h1v1h-1zM1468 897h1v1h-1zM1469 897h1v1h-1zM1470 897h1v1h-1zM1471 897h1v1h-1zM1472 897h1v1h-1zM1473 897h1v1h-1zM1474 897h1v1h-1zM1475 898h1v1h-1zM1476 898h1v1h-1zM1477 898h1v1h-1zM1478 898h1v1h-1zM1479 898h1v1h-1zM1480 898h1v1h-1zM1481 898h1v1h-1zM1482 898h1v1h-1zM1483 898h1v1h-1zM1484 898h1v1h-1zM1485 898h1v1h-1zM1486 898h1v1h-1zM1487 898h1v1h-1zM1488 898h1v1h-1zM1489 898h1v1h-1zM1490 898h1v1h-1zM1491 898h1v1h-1zM1492 898h1v1h-1zM1493 898h1v1h-1zM1494 898h1v1h-1zM1495 898h1v1h-1zM1496 898h1v1h-1zM1497 898h1v1h-1zM1498 898h1v1h-1zM1499 898h1v1h-1zM1500 898h1v1h-1zM1501 898h1v1h-1zM1502 898h1v1h-1zM1503 898h1v1h-1zM1504 898h1v1h-1zM1505 898h1v1h-1zM1506 898h1v1h-1zM1507 898h1v1h-1zM1508 898h1v1h-1zM1509 898h1v1h-1zM1510 898h1v1h-1zM1511 898h1v1h-1zM1512 898h1v1h-1zM1513 899h1v1h-1zM1514 899h1v1h-1zM1515 899h1v1h-1zM1516 899h1v1h-1zM1517 899h1v1h-1zM1518 899h1v1h-1zM1519 899h1v1h-1zM1520 899h1v1h-1zM1521 899h1v1h-1zM1522 899h1v1h-1zM1523 899h1v1h-1zM1524 899h1v1h-1zM1525 899h1v1h-1zM1526 899h1v1h-1zM1527 899h1v1h-1zM1528 899h1v1h-1zM1529 899h1v1h-1zM1530 899h1v1h-1zM1531 899h1v1h-1zM1532 899h1v1h-1zM1533 899h1v1h-1zM1534 899h1v1h-1zM1535 899h1v1h-1zM1536 899h1v1h-1zM1537 899h1v1h-1zM1538 899h1v1h-1zM1539 899h1v1h-1zM1540 899h1v1h-1zM1541 899h1v1h-1zM1542 899h1v1h-1zM1543 899h1v1h-1zM1544 899h1v1h-1zM1545 899h1v1h-1zM1546 900h1v1h-1zM1547 900h1v1h-1zM1548 900h1v1h-1zM1549 900h1v1h-1zM1550 900h1v1h-1zM1551 900h1v1h-1zM1552 900h1v1h-1zM1553 900h1v1h-1zM1554 900h1v1h-1zM1555 900h1v1h-1zM1556 900h1v1h-1zM1557 900h1v1h-1zM1558 900h1v1h-1zM1559 900h1v1h-1zM1560 900h1v1h-1zM1561 900h1v1h-1zM1562 900h1v1h-1zM1563 900h1v1h-1zM1564 900h1v1h-1zM1565 900h1v1h-1zM1566 900h1v1h-1zM1567 900h1v1h-1zM1568 900h1v1h-1zM1569 900h1v1h-1zM1570 900h1v1h-1zM1571 900h1v1h-1zM1572 900h1v1h-1zM1573 900h1v1h-1zM1574 900h1v1h-1zM1575 900h1v1h-1zM1576 900h1v1h-1zM1577 901h1v1h-1zM1578 901h1v1h-1zM1579 901h1v1h-1zM1580 901h1v1h-1zM1581 901h1v1h-1zM1582 901h1v1h-1zM1583 901h1v1h-1zM1584 901h1v1h-1zM1585 901h1v1h-1zM1586 901h1v1h-1zM1587 901h1v1h-1zM1588 901h1v1h-1zM1589 901h1v1h-1zM1590 901h1v1h-1zM1591 901h1v1h-1zM1592 901h1v1h-1zM1593 901h1v1h-1zM1594 901h1v1h-1zM1595 901h1v1h-1zM1596 901h1v1h-1zM1597 901h1v1h-1zM1598 901h1v1h-1z" fill="#a81414" shape-rendering="crispEdges"/>
</svg>
<div class="a" style="left:464px;top:951px;width:1128px;height:24px;background:#ededfa;border:1px solid #b4b4bc;border-right-color:#fff;border-bottom-color:#fff"></div>
<div class="t" style="left:468px;top:954px">285nm 2.532Abs</div>
<div class="t" style="left:1623px;top:306px">Sample ID:</div>
<div class="a" style="left:1699px;top:302px;width:146px;height:23px;background:#fff;border-bottom:2px solid #1a66b5"></div>
<div class="a" style="left:1759px;top:304px;width:27px;height:17px;background:#0a64c8"></div>
<div class="t" style="left:1760px;top:306px;color:#fff">B06</div>
<div class="t b" style="left:1851px;top:306px;letter-spacing:0.3px">Pedestal</div>
<div class="t" style="left:1648px;top:346px">Type:</div>
<div class="a" style="left:1698px;top:341px;width:124px;height:24px;background:#f0f0f0;border:1px solid #fdfdfd"></div>
<div class="a" style="left:1698px;top:341px;width:106px;height:23px;background:#ffbbff"></div>
<div class="t" style="left:1701px;top:346px">RNA</div>
<svg class="a" style="left:1809px;top:350px" width="8" height="5"><path d="M0.5 0.5h7l-3.5 3.8z" fill="#000"/></svg>
<div class="a" style="left:1828px;top:342px;width:70px;height:23px;background:#efefef;border:1px solid #e0e0e0;border-bottom:1px solid #8c8c8c"></div>
<div class="t" style="left:1831px;top:346px">40.00</div>
<div class="t" style="left:1645px;top:381px">Conc.</div>
<div class="a" style="left:1698px;top:379px;width:123px;height:22px;background:#ffbbff;border-bottom:1px solid #8c8c8c"></div>
<div class="t b" style="right:101px;top:382px">297.8</div>
<div class="a" style="left:1828px;top:376px;width:71px;height:26px;background:#fff;border:1px solid #d9d9d9;border-radius:3px"></div>
<div class="t b" style="left:1832px;top:382px">ng/µl</div>
<svg class="a" style="left:1884px;top:385px" width="12" height="8"><path d="M1 1.5 L6 6.5 L11 1.5" stroke="#444" stroke-width="1.1" fill="none"/></svg>
<div class="t" style="right:103px;top:415px">A260 (10 mm path)</div>
<div class="fld" style="left:1827px;top:412px;width:72px;height:21px;padding:2px 5px 0 0">7.446</div>
<div class="t" style="right:103px;top:445px">A280 (10 mm path)</div>
<div class="fld" style="left:1827px;top:442px;width:72px;height:21px;padding:2px 5px 0 0">3.570</div>
<div class="t" style="right:103px;top:475px">260 / 280</div>
<div class="fld" style="left:1827px;top:472px;width:72px;height:21px;padding:2px 5px 0 0">2.09</div>
<div class="t" style="right:103px;top:505px">260 / 230</div>
<div class="fld" style="left:1827px;top:502px;width:72px;height:21px;padding:2px 5px 0 0">1.98</div>
<div class="a" style="left:1670px;top:539px;width:13px;height:13px;background:#0a5fc1;border-radius:3px"></div>
<svg class="a" style="left:1670px;top:539px" width="13" height="13"><path d="M3.4 6.8 L5.5 8.8 L9.6 4.6" stroke="#fff" stroke-width="1.05" fill="none"/></svg>
<div class="t" style="left:1689px;top:539px">Baseline correction</div>
<div class="a" style="left:1828px;top:533px;width:42px;height:24px;background:#fff;border-bottom:1px solid #8c8c8c"></div>
<div class="t" style="left:1837px;top:538px">340</div>
<div class="t" style="left:1876px;top:538px">nm</div>
<div class="a" style="left:464px;top:985px;width:1453px;height:228px;background:#ededfa;border:1px solid #000"></div>
<div class="a" style="left:465px;top:986px;width:1129px;height:214px;background:#fff"></div>
<div class="a" style="left:465px;top:1179px;width:1129px;height:20px;background:#0078d7"></div>
<div class="a" style="left:506px;top:987px;width:1px;height:23px;background:#e4e4e4"></div>
<div class="a" style="left:617px;top:987px;width:1px;height:23px;background:#e4e4e4"></div>
<div class="a" style="left:722px;top:987px;width:1px;height:23px;background:#e4e4e4"></div>
<div class="a" style="left:850px;top:987px;width:1px;height:23px;background:#e4e4e4"></div>
<div class="a" style="left:962px;top:987px;width:1px;height:23px;background:#e4e4e4"></div>
<div class="a" style="left:1020px;top:987px;width:1px;height:23px;background:#e4e4e4"></div>
<div class="a" style="left:1125px;top:987px;width:1px;height:23px;background:#e4e4e4"></div>
<div class="a" style="left:1230px;top:987px;width:1px;height:23px;background:#e4e4e4"></div>
<div class="a" style="left:1315px;top:987px;width:1px;height:23px;background:#e4e4e4"></div>
<div class="a" style="left:1400px;top:987px;width:1px;height:23px;background:#e4e4e4"></div>
<div class="a" style="left:1518px;top:987px;width:1px;height:23px;background:#e4e4e4"></div>
<div class="a" style="left:1593px;top:987px;width:1px;height:23px;background:#e4e4e4"></div>
<div class="a" style="left:465px;top:1010px;width:1129px;height:1px;background:#a8a8a8"></div>
<div class="a" style="left:465px;top:1031px;width:1129px;height:1px;background:#a8a8a8"></div>
<div class="a" style="left:465px;top:1052px;width:1129px;height:1px;background:#a8a8a8"></div>
<div class="a" style="left:465px;top:1073px;width:1129px;height:1px;background:#a8a8a8"></div>
<div class="a" style="left:465px;top:1094px;width:1129px;height:1px;background:#a8a8a8"></div>
<div class="a" style="left:465px;top:1115px;width:1129px;height:1px;background:#a8a8a8"></div>
<div class="a" style="left:465px;top:1136px;width:1129px;height:1px;background:#a8a8a8"></div>
<div class="a" style="left:465px;top:1157px;width:1129px;height:1px;background:#a8a8a8"></div>
<div class="a" style="left:465px;top:1178px;width:1129px;height:1px;background:#a8a8a8"></div>
<div class="a" style="left:465px;top:1199px;width:1129px;height:1px;background:#a8a8a8"></div>
<div class="a" style="left:506px;top:1010px;width:1px;height:190px;background:#a8a8a8"></div>
<div class="a" style="left:617px;top:1010px;width:1px;height:190px;background:#a8a8a8"></div>
<div class="a" style="left:722px;top:1010px;width:1px;height:190px;background:#a8a8a8"></div>
<div class="a" style="left:850px;top:1010px;width:1px;height:190px;background:#a8a8a8"></div>
<div class="a" style="left:962px;top:1010px;width:1px;height:190px;background:#a8a8a8"></div>
<div class="a" style="left:1020px;top:1010px;width:1px;height:190px;background:#a8a8a8"></div>
<div class="a" style="left:1125px;top:1010px;width:1px;height:190px;background:#a8a8a8"></div>
<div class="a" style="left:1230px;top:1010px;width:1px;height:190px;background:#a8a8a8"></div>
<div class="a" style="left:1315px;top:1010px;width:1px;height:190px;background:#a8a8a8"></div>
<div class="a" style="left:1400px;top:1010px;width:1px;height:190px;background:#a8a8a8"></div>
<div class="a" style="left:1518px;top:1010px;width:1px;height:190px;background:#a8a8a8"></div>
<div class="a" style="left:1593px;top:1010px;width:1px;height:190px;background:#a8a8a8"></div>
<div class="cell" style="left:474px;top:992px">#</div>
<div class="cell" style="left:514px;top:992px">Sample ID</div>
<div class="cell" style="left:625px;top:992px">User name</div>
<div class="cell" style="left:730px;top:992px">Date and Time</div>
<div class="cell" style="left:858px;top:992px">Nucleic Acid</div>
<div class="cell" style="left:970px;top:992px">Unit</div>
<div class="cell" style="left:1028px;top:992px">A260 (Abs)</div>
<div class="cell" style="left:1133px;top:992px">A280 (Abs)</div>
<div class="cell" style="left:1238px;top:992px">260/280</div>
<div class="cell" style="left:1323px;top:992px">260/230</div>
<div class="cell" style="left:1408px;top:992px">Sample Type</div>
<div class="cell" style="left:1526px;top:992px">Factor</div>
<div class="cell" style="left:470px;top:1015px;color:#000">17</div>
<div class="cell" style="left:510px;top:1015px;color:#000">B10</div>
<div class="cell" style="left:621px;top:1015px;color:#000">TP-SSV</div>
<div class="cell" style="left:726px;top:1015px;color:#000">04.10.2024 11:58</div>
<div class="cell" style="left:854px;top:1015px;color:#000">186.2</div>
<div class="cell" style="left:966px;top:1015px;color:#000">ng/µl</div>
<div class="cell" style="left:1024px;top:1015px;color:#000">4.654</div>
<div class="cell" style="left:1129px;top:1015px;color:#000">2.255</div>
<div class="cell" style="left:1234px;top:1015px;color:#000">2.06</div>
<div class="cell" style="left:1319px;top:1015px;color:#000">1.50</div>
<div class="cell" style="left:1404px;top:1015px;color:#000">RNA</div>
<div class="cell" style="left:1522px;top:1015px;color:#000">40.00</div>
<div class="cell" style="left:470px;top:1036px;color:#000">18</div>
<div class="cell" style="left:510px;top:1036px;color:#000">B09</div>
<div class="cell" style="left:621px;top:1036px;color:#000">TP-SSV</div>
<div class="cell" style="left:726px;top:1036px;color:#000">04.10.2024 12:00</div>
<div class="cell" style="left:854px;top:1036px;color:#000">409.4</div>
<div class="cell" style="left:966px;top:1036px;color:#000">ng/µl</div>
<div class="cell" style="left:1024px;top:1036px;color:#000">10.236</div>
<div class="cell" style="left:1129px;top:1036px;color:#000">4.827</div>
<div class="cell" style="left:1234px;top:1036px;color:#000">2.12</div>
<div class="cell" style="left:1319px;top:1036px;color:#000">1.79</div>
<div class="cell" style="left:1404px;top:1036px;color:#000">RNA</div>
<div class="cell" style="left:1522px;top:1036px;color:#000">40.00</div>
<div class="cell" style="left:470px;top:1057px;color:#000">19</div>
<div class="cell" style="left:510px;top:1057px;color:#000">B09</div>
<div class="cell" style="left:621px;top:1057px;color:#000">TP-SSV</div>
<div class="cell" style="left:726px;top:1057px;color:#000">04.10.2024 12:11</div>
<div class="cell" style="left:854px;top:1057px;color:#000">0.3</div>
<div class="cell" style="left:966px;top:1057px;color:#000">ng/µl</div>
<div class="cell" style="left:1024px;top:1057px;color:#000">0.006</div>
<div class="cell" style="left:1129px;top:1057px;color:#000">0.000</div>
<div class="cell" style="left:1234px;top:1057px;color:#000">197.86</div>
<div class="cell" style="left:1319px;top:1057px;color:#000">0.79</div>
<div class="cell" style="left:1404px;top:1057px;color:#000">RNA</div>
<div class="cell" style="left:1522px;top:1057px;color:#000">40.00</div>
<div class="cell" style="left:470px;top:1078px;color:#000">20</div>
<div class="cell" style="left:510px;top:1078px;color:#000">B14</div>
<div class="cell" style="left:621px;top:1078px;color:#000">TP-SSV</div>
<div class="cell" style="left:726px;top:1078px;color:#000">04.10.2024 12:13</div>
<div class="cell" style="left:854px;top:1078px;color:#000">405.2</div>
<div class="cell" style="left:966px;top:1078px;color:#000">ng/µl</div>
<div class="cell" style="left:1024px;top:1078px;color:#000">10.130</div>
<div class="cell" style="left:1129px;top:1078px;color:#000">4.760</div>
<div class="cell" style="left:1234px;top:1078px;color:#000">2.13</div>
<div class="cell" style="left:1319px;top:1078px;color:#000">1.83</div>
<div class="cell" style="left:1404px;top:1078px;color:#000">RNA</div>
<div class="cell" style="left:1522px;top:1078px;color:#000">40.00</div>
<div class="cell" style="left:470px;top:1099px;color:#000">21</div>
<div class="cell" style="left:510px;top:1099px;color:#000">B13</div>
<div class="cell" style="left:621px;top:1099px;color:#000">TP-SSV</div>
<div class="cell" style="left:726px;top:1099px;color:#000">04.10.2024 12:15</div>
<div class="cell" style="left:854px;top:1099px;color:#000">189.4</div>
<div class="cell" style="left:966px;top:1099px;color:#000">ng/µl</div>
<div class="cell" style="left:1024px;top:1099px;color:#000">4.735</div>
<div class="cell" style="left:1129px;top:1099px;color:#000">2.285</div>
<div class="cell" style="left:1234px;top:1099px;color:#000">2.07</div>
<div class="cell" style="left:1319px;top:1099px;color:#000">2.06</div>
<div class="cell" style="left:1404px;top:1099px;color:#000">RNA</div>
<div class="cell" style="left:1522px;top:1099px;color:#000">40.00</div>
<div class="cell" style="left:470px;top:1120px;color:#000">22</div>
<div class="cell" style="left:510px;top:1120px;color:#000">B13_14_control</div>
<div class="cell" style="left:621px;top:1120px;color:#000">TP-SSV</div>
<div class="cell" style="left:726px;top:1120px;color:#000">04.10.2024 12:17</div>
<div class="cell" style="left:854px;top:1120px;color:#000">519.8</div>
<div class="cell" style="left:966px;top:1120px;color:#000">ng/µl</div>
<div class="cell" style="left:1024px;top:1120px;color:#000">12.994</div>
<div class="cell" style="left:1129px;top:1120px;color:#000">6.131</div>
<div class="cell" style="left:1234px;top:1120px;color:#000">2.12</div>
<div class="cell" style="left:1319px;top:1120px;color:#000">2.21</div>
<div class="cell" style="left:1404px;top:1120px;color:#000">RNA</div>
<div class="cell" style="left:1522px;top:1120px;color:#000">40.00</div>
<div class="cell" style="left:470px;top:1141px;color:#000">23</div>
<div class="cell" style="left:510px;top:1141px;color:#000">B13_14_control</div>
<div class="cell" style="left:621px;top:1141px;color:#000">TP-SSV</div>
<div class="cell" style="left:726px;top:1141px;color:#000">04.10.2024 13:04</div>
<div class="cell" style="left:854px;top:1141px;color:#000">0.2</div>
<div class="cell" style="left:966px;top:1141px;color:#000">ng/µl</div>
<div class="cell" style="left:1024px;top:1141px;color:#000">0.004</div>
<div class="cell" style="left:1129px;top:1141px;color:#000">-0.010</div>
<div class="cell" style="left:1234px;top:1141px;color:#000">-0.42</div>
<div class="cell" style="left:1319px;top:1141px;color:#000">-0.44</div>
<div class="cell" style="left:1404px;top:1141px;color:#000">RNA</div>
<div class="cell" style="left:1522px;top:1141px;color:#000">40.00</div>
<div class="cell" style="left:470px;top:1162px;color:#000">24</div>
<div class="cell" style="left:510px;top:1162px;color:#000">B05_06_control</div>
<div class="cell" style="left:621px;top:1162px;color:#000">TP-SSV</div>
<div class="cell" style="left:726px;top:1162px;color:#000">04.10.2024 13:09</div>
<div class="cell" style="left:854px;top:1162px;color:#000">516.8</div>
<div class="cell" style="left:966px;top:1162px;color:#000">ng/µl</div>
<div class="cell" style="left:1024px;top:1162px;color:#000">12.921</div>
<div class="cell" style="left:1129px;top:1162px;color:#000">6.018</div>
<div class="cell" style="left:1234px;top:1162px;color:#000">2.15</div>
<div class="cell" style="left:1319px;top:1162px;color:#000">2.21</div>
<div class="cell" style="left:1404px;top:1162px;color:#000">RNA</div>
<div class="cell" style="left:1522px;top:1162px;color:#000">40.00</div>
<div class="cell" style="left:470px;top:1183px;color:#fff">25</div>
<div class="cell" style="left:510px;top:1183px;color:#fff">B06</div>
<div class="cell" style="left:621px;top:1183px;color:#fff">TP-SSV</div>
<div class="cell" style="left:726px;top:1183px;color:#fff">04.10.2024 13:10</div>
<div class="cell" style="left:854px;top:1183px;color:#fff">297.8</div>
<div class="cell" style="left:966px;top:1183px;color:#fff">ng/µl</div>
<div class="cell" style="left:1024px;top:1183px;color:#fff">7.446</div>
<div class="cell" style="left:1129px;top:1183px;color:#fff">3.570</div>
<div class="cell" style="left:1234px;top:1183px;color:#fff">2.09</div>
<div class="cell" style="left:1319px;top:1183px;color:#fff">1.98</div>
<div class="cell" style="left:1404px;top:1183px;color:#fff">RNA</div>
<div class="cell" style="left:1522px;top:1183px;color:#fff">40.00</div>
<div class="a" style="left:1900px;top:986px;width:16px;height:226px;background:#f0f0f0"></div>
<div class="a" style="left:1907.5px;top:1122px;width:2px;height:72px;background:#8a8a8a;border-radius:1px"></div>
<div class="a" style="left:0;top:1219px;width:1920px;height:23px;background:#f0f0f0;border-top:1px solid #e0e0e0"></div>
<div class="t ui" style="right:18.3px;top:1225px;font-size:11.5px;letter-spacing:-0.65px">TP-SSV</div>
<div class="a" style="left:0;top:1241px;width:1920px;height:48px;background:linear-gradient(90deg,#e1ecf8 0%,#dde7f6 14%,#d8e1f5 32%,#d9e1f7 55%,#dde7f7 75%,#e1ecf8 100%);border-top:1px solid #c3cad6"></div>
<!--TASKBAR-->
<svg class="a" style="left:2px;top:212px" width="16" height="16" viewBox="0 0 16 16" ><defs><linearGradient id="agt" x1="0" y1="0" x2="1" y2="0"><stop offset="0" stop-color="#5f7fae"/><stop offset="1" stop-color="#aebfd6"/></linearGradient></defs>
<rect x="0.3" y="0.5" width="15.4" height="15" fill="url(#agt)"/>
<path d="M1 2 Q1 0.4 2.8 0.4 H13.2 Q15 0.4 15 2 V3 Q15 3.8 14.2 4.4 L12.8 5.6 H3.2 L1.8 4.4 Q1 3.8 1 3Z" fill="#05070c"/>
<path d="M1 14 Q1 15.6 2.8 15.6 H13.2 Q15 15.6 15 14 V13 Q15 12.2 14.2 11.6 L12.8 10.4 H3.2 L1.8 11.6 Q1 12.2 1 13Z" fill="#05070c"/>
<path d="M4.2 5.9 H11.8 L10.8 8 L11.8 10.1 H4.2 L5.2 8Z" fill="#1f55a8"/>
<rect x="6.3" y="7.2" width="3.4" height="1.5" rx="0.5" fill="#9fd0f5"/></svg><svg class="a" style="left:461px;top:258px" width="22" height="40" ><defs><linearGradient id="pg1" x1="0" y1="0" x2="0" y2="1"><stop offset="0" stop-color="#7a7aa8"/><stop offset="0.15" stop-color="#61618f"/><stop offset="0.85" stop-color="#3e3e5e"/><stop offset="1" stop-color="#55557a"/></linearGradient>
<linearGradient id="pg2" x1="0" y1="0" x2="0" y2="1"><stop offset="0" stop-color="#f4efe0"/><stop offset="0.12" stop-color="#6fb0ea"/><stop offset="0.6" stop-color="#3f86d0"/><stop offset="0.9" stop-color="#25405f"/><stop offset="1" stop-color="#c8c8c8"/></linearGradient></defs>
<rect width="22" height="40" fill="url(#pg1)"/>
<rect x="1" y="7" width="20" height="25" fill="url(#pg2)"/>
<path d="M2 10 H20 L13.5 15 Q12 17 12.6 19.5 L13 21 Q16 22.5 18.5 25.5 Q20.5 28 19 29.5 Q11 32 3 29.5 Q1.5 28 3.5 25.5 Q6 22.5 9 21 L9.4 19.5 Q10 17 8.5 15Z" fill="#0b0f14"/>
<path d="M2 9.6 H20 L19 11 H3Z" fill="#1a1208"/>
<circle cx="10.2" cy="14.5" r="0.9" fill="#e8e8e8"/><circle cx="11" cy="18.3" r="1" fill="#f2f2f2"/>
<rect x="8.3" y="22.6" width="1.3" height="2.8" fill="#e9e2d0"/><rect x="12" y="22.6" width="1.3" height="2.8" fill="#d8d0bc"/>
<circle cx="14.3" cy="28.2" r="1" fill="#f5e6c8"/>
<path d="M3.5 29.5 Q11 32.5 18.5 29.5" stroke="#777" stroke-width="0.6" fill="none"/></svg><svg class="a" style="left:7.2px;top:258.4px" width="43.6" height="45.7" viewBox="0 0 42 44" ><defs>
<linearGradient id="mring" x1="0" y1="0" x2="1" y2="1"><stop offset="0" stop-color="#9a9a9a"/><stop offset="0.5" stop-color="#d8d8d8"/><stop offset="1" stop-color="#8c8c8c"/></linearGradient>
<linearGradient id="mtop" x1="0" y1="0" x2="0" y2="1"><stop offset="0" stop-color="#7fd596"/><stop offset="1" stop-color="#a8e6b8"/></linearGradient>
<linearGradient id="mbot" x1="0" y1="0" x2="0" y2="1"><stop offset="0" stop-color="#17961c"/><stop offset="0.6" stop-color="#2fb52c"/><stop offset="1" stop-color="#63d24a"/></linearGradient>
<clipPath id="mclip"><circle cx="21.2" cy="21.3" r="16.3"/></clipPath>
<filter id="mblur" x="-20%" y="-20%" width="140%" height="140%"><feGaussianBlur stdDeviation="0.7"/></filter>
</defs>
<circle cx="21.4" cy="21.9" r="19.6" fill="#bdbdbd" opacity="0.55" filter="url(#mblur)"/>
<circle cx="21.2" cy="21.3" r="18.9" fill="url(#mring)"/>
<circle cx="21.2" cy="21.3" r="16.9" fill="#1c7a2a"/>
<g clip-path="url(#mclip)">
<rect x="0" y="0" width="42" height="42" fill="url(#mbot)"/>
<path d="M0 0 H42 V23 Q36 19.5 31 23 Q26 26.5 21 25.5 Q15 24.5 11 25.5 Q6 27 0 25Z" fill="url(#mtop)"/>
<ellipse cx="21" cy="13" rx="13" ry="8" fill="#c4f0cf" opacity="0.45"/>
</g>
<path d="M14.9 12.9 L30.4 21.3 L14.9 30.4Z" fill="#0a5a12"/>
<path d="M14.9 12.9 L30.4 21.3 L22 21.5 L14.9 24Z" fill="#0c5012"/></svg>
<svg class="a" style="left:58px;top:264px" width="42" height="34" ><defs>
<linearGradient id="pb" x1="0" y1="0" x2="1" y2="0.6"><stop offset="0" stop-color="#5a8cc2"/><stop offset="0.5" stop-color="#7eaad8"/><stop offset="1" stop-color="#4a7cb4"/></linearGradient>
<linearGradient id="pc" x1="0" y1="0" x2="0.3" y2="1"><stop offset="0" stop-color="#f6f4e2"/><stop offset="0.6" stop-color="#e6e4c8"/><stop offset="1" stop-color="#a8aa98"/></linearGradient>
<linearGradient id="pp" x1="0" y1="0" x2="1" y2="1"><stop offset="0" stop-color="#ffffff"/><stop offset="1" stop-color="#cfd1d6"/></linearGradient>
<filter id="pblur"><feGaussianBlur stdDeviation="0.7"/></filter>
</defs>
<path d="M3 25 L12 31.5 L27 31 L40.5 24.5 L40 21 L12 29Z" fill="#8a8a8a" opacity="0.55" filter="url(#pblur)"/>
<path d="M26.6 2.2 L36.5 1.9 L33.7 11.6 L23.25 9.9Z" fill="url(#pp)" stroke="#c4c6cc" stroke-width="0.5"/>
<path d="M5.8 17.6 Q7.4 13.4 13.9 11.3 L9.2 17 V20.4 L5.8 19.4Z" fill="#ece9cf"/>
<path d="M9.2 17 L13.9 11.3 Q18 9.7 23.25 10.2 L30.5 13.9 Q25 15.5 23.25 18 L21.7 25.3 L9.2 20.3Z" fill="url(#pb)"/>
<path d="M15.5 11.2 Q19 10 23.2 10.4 L28.6 13.2 Q23 12.2 15.5 11.2Z" fill="#2f5478"/>
<path d="M23.25 18 Q25 15 30.5 13.9 L38.4 13.6 Q40.7 14.6 40.7 17 L39.9 23.25 Q39.4 24.6 37.6 25.4 L26.4 29.4 L22 26.6Z" fill="url(#pc)"/>
<path d="M22 26.6 L26.4 29.4 L37.6 25.4 Q39.4 24.6 39.9 23.25 L26.8 27.4 L23.4 25Z" fill="#7f8478" opacity="0.8"/>
<path d="M1.4 22.9 L9.2 20.6 L21.2 25.3 L11.8 29.7Z" fill="url(#pp)" stroke="#a4a6ac" stroke-width="0.6"/>
<rect x="23.6" y="24.6" width="1.6" height="0.7" fill="#4aa04a"/></svg>
<svg class="a" style="left:106px;top:260.7px" width="40" height="30" ><defs><linearGradient id="bga" x1="0" y1="0" x2="0" y2="1"><stop offset="0" stop-color="#c4c4c4"/><stop offset="0.12" stop-color="#d4d4d4"/><stop offset="0.45" stop-color="#ebebeb"/><stop offset="0.9" stop-color="#d6d6d6"/><stop offset="1" stop-color="#c2c2c2"/></linearGradient>
<filter id="bfa" x="-20%" y="-20%" width="140%" height="150%"><feGaussianBlur stdDeviation="0.9"/></filter></defs>
<rect x="3" y="4" width="28.4" height="20.5" rx="1.5" fill="#9a9a9a" opacity="0.55" filter="url(#bfa)"/>
<rect x="3" y="3" width="28.4" height="20.3" rx="1.2" fill="url(#bga)"/>
<path d="M6.2 12.6 H24.5" stroke="#1a1a1a" stroke-width="1.1"/>
<path d="M23.2 10.6 L27.2 12.6 L23.2 14.6Z" fill="#1a1a1a"/></svg>
<svg class="a" style="left:153px;top:260px" width="40" height="30" ><defs><linearGradient id="bgb" x1="0" y1="0" x2="0" y2="1"><stop offset="0" stop-color="#c4c4c4"/><stop offset="0.12" stop-color="#d4d4d4"/><stop offset="0.45" stop-color="#ebebeb"/><stop offset="0.9" stop-color="#d6d6d6"/><stop offset="1" stop-color="#c2c2c2"/></linearGradient>
<filter id="bfb" x="-20%" y="-20%" width="140%" height="150%"><feGaussianBlur stdDeviation="0.9"/></filter></defs>
<rect x="3" y="4" width="27.8" height="20.5" rx="1.5" fill="#9a9a9a" opacity="0.55" filter="url(#bfb)"/>
<rect x="3" y="3" width="27.8" height="20.3" rx="1.2" fill="url(#bgb)"/>
<path d="M6.2 12.6 H24.5" stroke="#1a1a1a" stroke-width="1.1"/>
<path d="M23.2 10.6 L27.2 12.6 L23.2 14.6Z" fill="#1a1a1a"/></svg>
<svg class="a" style="left:150px;top:258px" width="50" height="40" ><path d="M33.16 11.33 A8.5 8.5 0 1 1 26.94 24.68" fill="none" stroke="#e8392b" stroke-width="4"/>
<path d="M26.50 10.60 L33.50 6.60 L34.70 14.60Z" fill="#e8392b"/></svg><svg class="a" style="left:8px;top:998px" width="32" height="28" ><defs><linearGradient id="hr" x1="0" y1="0" x2="1" y2="1"><stop offset="0" stop-color="#e8a030"/><stop offset="1" stop-color="#b86a10"/></linearGradient>
<linearGradient id="hw" x1="0" y1="0" x2="1" y2="0"><stop offset="0" stop-color="#ffffff"/><stop offset="1" stop-color="#d0dae4"/></linearGradient></defs>
<path d="M1 17.5 L7 14.5 L22 20 L12.5 24.5Z" fill="#1f6f9c"/>
<path d="M6 9.5 L11 5 L15 11 V22.5 L6 18.5Z" fill="#4ea0d0"/>
<path d="M15 11 L29 8 V18.5 L15 22.5Z" fill="url(#hw)"/>
<path d="M10 1.8 L12.2 1.2 L12.4 4 L10 5Z" fill="#b86a10"/>
<path d="M4.3 8 L10.5 2.8 L24 1.5 L30 7.5 L15.2 11.2 L10.8 5 L5 9.2Z" fill="url(#hr)"/>
<path d="M10.8 5 L15.2 11.2 L14 11.8 L10.5 6.5 L5 9.4 L4.3 8Z" fill="#a85c0c"/>
<rect x="8.2" y="10.5" width="2.8" height="3.6" fill="#1b5f8c" transform="skewY(22) translate(0,-3.6)"/>
<path d="M19.5 12.6 L23 11.9 V20.2 L19.5 21.2Z" fill="#1b6a9a"/></svg>
<svg class="a" style="left:8px;top:1029px" width="32" height="29" ><defs><linearGradient id="tg" x1="0" y1="0" x2="1" y2="0"><stop offset="0" stop-color="#fafafa"/><stop offset="0.35" stop-color="#d4d4d8"/><stop offset="0.7" stop-color="#f4f4f6"/><stop offset="1" stop-color="#b8b8be"/></linearGradient>
<linearGradient id="ty" x1="0" y1="0" x2="0" y2="1"><stop offset="0" stop-color="#f8e468"/><stop offset="1" stop-color="#d8a414"/></linearGradient>
<linearGradient id="tt" x1="0" y1="0" x2="1" y2="1"><stop offset="0" stop-color="#f4e470"/><stop offset="1" stop-color="#e0b828"/></linearGradient></defs>
<path d="M1 16.4 L2.6 14 L11.5 19.4 L11 21.6 L5 21Z" fill="#101214"/>
<path d="M2 7 Q2.2 1.4 8.5 1.3 L13 1.6 Q16.6 2.4 16.8 8 V16.6 L11.6 17.4 L10.6 20.4 L4 18.6 Q2 17.2 2 13Z" fill="url(#tg)"/>
<ellipse cx="6.6" cy="9.8" rx="3.6" ry="7" fill="#9c9ca4"/>
<ellipse cx="7.2" cy="9.8" rx="2.6" ry="6" fill="#ececf0"/>
<path d="M13 6.2 Q14 5 17 5.4 Q18.4 9 18.2 13.6 L13.4 14.6Z" fill="url(#ty)"/>
<path d="M14.6 7 Q15.6 10 15.2 13.8" stroke="#c89010" stroke-width="0.7" fill="none"/>
<path d="M11.6 17.2 L16.6 15.6 L28.6 21.8 L24.4 25.4Z" fill="url(#tt)"/>
<path d="M13.2 16.8 L26.2 23.8" stroke="#b88c10" stroke-width="0.6"/>
<path d="M15.4 17.2 l-1 1.2 M18 18.6 l-1 1.2 M20.6 20 l-1 1.2 M23.2 21.4 l-1 1.2" stroke="#8a6a08" stroke-width="0.5"/>
<path d="M24.4 25.4 L28.6 21.8 L29.8 24.4 L25.4 27.4Z" fill="#dcdee2"/>
<path d="M25.4 27.4 L29.8 24.4 L29.6 25.2 L25.6 28Z" fill="#a0a4aa"/></svg>
<svg class="a" style="left:12px;top:1062px" width="27" height="26" ><rect x="3.6" y="1.4" width="13.8" height="17.5" rx="0.8" fill="#f04255" stroke="#a81828" stroke-width="0.8"/><path d="M4.2 2.3 H16.400000000000002" stroke="#f7909a" stroke-width="0.8"/><path d="M1.0 3.8 H4.8" stroke="#2a0a0e" stroke-width="1"/><path d="M1.0 6.4 H4.8" stroke="#2a0a0e" stroke-width="1"/><path d="M1.0 9.0 H4.8" stroke="#2a0a0e" stroke-width="1"/><path d="M1.0 11.7 H4.8" stroke="#2a0a0e" stroke-width="1"/><path d="M1.0 14.3 H4.8" stroke="#2a0a0e" stroke-width="1"/><path d="M1.0 16.9 H4.8" stroke="#2a0a0e" stroke-width="1"/><rect x="9.2" y="5.8" width="15.2" height="18" rx="0.8" fill="#f04255" stroke="#a81828" stroke-width="0.8"/><path d="M9.799999999999999 6.7 H23.4" stroke="#f7909a" stroke-width="0.8"/><path d="M6.6 8.2 H10.399999999999999" stroke="#2a0a0e" stroke-width="1"/><path d="M6.6 10.9 H10.399999999999999" stroke="#2a0a0e" stroke-width="1"/><path d="M6.6 13.6 H10.399999999999999" stroke="#2a0a0e" stroke-width="1"/><path d="M6.6 16.4 H10.399999999999999" stroke="#2a0a0e" stroke-width="1"/><path d="M6.6 19.1 H10.399999999999999" stroke="#2a0a0e" stroke-width="1"/><path d="M6.6 21.8 H10.399999999999999" stroke="#2a0a0e" stroke-width="1"/><rect x="13" y="9.6" width="7" height="3.2" rx="0.6" fill="#fff" stroke="#b02030" stroke-width="0.7"/></svg>
<svg class="a" style="left:10px;top:1093px" width="30" height="27" ><defs><linearGradient id="cg" x1="0" y1="0" x2="1" y2="0"><stop offset="0" stop-color="#5f6f88"/><stop offset="1" stop-color="#8897ad"/></linearGradient>
<linearGradient id="cf" x1="0" y1="0" x2="0" y2="1"><stop offset="0" stop-color="#aab6c8"/><stop offset="1" stop-color="#c4cedc"/></linearGradient></defs>
<path d="M1 20.5 L5 19 L14 25.6 L8 26Z" fill="#1d2026"/>
<path d="M4.5 1.5 L8.8 3.5 V24 L4.5 20.5Z" fill="url(#cg)"/>
<path d="M4.5 1.5 L20 1.2 L23.5 3.2 L8.8 3.5Z" fill="#7886a0"/>
<rect x="8.8" y="3.5" width="14.7" height="11" fill="url(#cf)"/>
<rect x="13.3" y="5.6" width="4.6" height="2.2" rx="0.5" fill="#fff" stroke="#8e9ab0" stroke-width="0.5"/>
<path d="M11.8 11.5 Q12.2 9 15 9.2 L17 9 L18 10 L24.8 10.4 L24 14.8 H12.4Z" fill="#f3d868"/>
<path d="M12.4 11.2 H23.6 L24 14.8 H12.4Z" fill="#e8c84c"/>
<path d="M9.5 12.6 L12.5 14.6 H26.6 V25.4 H12.2 L9.5 23.2Z" fill="url(#cf)"/>
<path d="M9.5 12.6 L12.5 14.6 V25.4 L9.5 23.2Z" fill="#7a889f"/>
<path d="M12.5 14.6 H26.6 L24.6 13.4 H10.8Z" fill="#3a4250"/>
<rect x="17.2" y="17" width="5.2" height="2.2" rx="0.6" fill="#fff" stroke="#8e9ab0" stroke-width="0.5"/>
<rect x="17.4" y="20.8" width="4.8" height="1.1" fill="#8e98aa"/></svg>
<svg class="a" style="left:8px;top:1123px" width="33" height="31" ><defs><linearGradient id="kg" x1="0" y1="0" x2="1" y2="1"><stop offset="0" stop-color="#4c8fd0"/><stop offset="1" stop-color="#9cc4ec"/></linearGradient></defs>
<g fill="none" stroke="#ef6a14" stroke-width="2.6" stroke-linecap="round">
<path d="M19.8 2 Q20 7 25 10 Q30 13 29 17 Q28 21 23.5 24 Q19.5 26.5 20 29.5"/>
<path d="M29.4 2 Q29.5 6 25 10 Q20.5 13.5 22 17 Q23 20.5 26.5 23.5 Q29.8 26.5 29.4 29.5"/></g>
<g stroke="#2f7fc8" stroke-width="1.6"><path d="M21.5 3.6 H28"/><path d="M22.5 13.3 H28.5"/><path d="M22.5 16.2 H28.5"/><path d="M22 27.6 H28"/></g>
<path d="M1.2 8.6 L15.6 3 L26.2 19.6 L10.2 26.4Z" fill="url(#kg)"/>
<path d="M1.2 8.6 L10.2 26.4 L10.6 28.2 L1 10.4Z" fill="#1a3f80"/>
<path d="M10.2 26.4 L26.2 19.6 L26.4 21.2 L10.6 28.2Z" fill="#2a5aa0"/>
<path d="M5 9.2 L14.2 5.6 L15.6 8 L6.4 11.8Z" fill="#e8f2fc" stroke="#2a66b0" stroke-width="0.5"/>
<g fill="#f4f9ff"><path d="M7.6 14.6 L9.6 13.8 L10.5 15.4 L8.5 16.2Z"/><path d="M10.8 13.3 L12.8 12.5 L13.7 14.1 L11.7 14.9Z"/><path d="M9.2 17.6 L11.2 16.8 L12.1 18.4 L10.1 19.2Z"/><path d="M12.4 16.3 L14.4 15.5 L15.3 17.1 L13.3 17.9Z"/><path d="M10.8 20.6 L12.8 19.8 L13.7 21.4 L11.7 22.2Z"/><path d="M14 19.3 L16 18.5 L16.9 20.1 L14.9 20.9Z"/><path d="M14.6 11.6 L16.4 10.9 L20.4 17.6 L18.6 18.4Z"/><path d="M17.6 20.8 L19.6 20 L20.2 21.2 L18.2 22Z"/></g></svg>
<svg class="a" style="left:10px;top:1157px" width="30" height="28" ><defs><linearGradient id="og" x1="0" y1="0" x2="1" y2="1"><stop offset="0" stop-color="#e6f0f8"/><stop offset="1" stop-color="#8fb8d8"/></linearGradient>
<radialGradient id="ob" cx="0.35" cy="0.3" r="0.8"><stop offset="0" stop-color="#f4faff"/><stop offset="1" stop-color="#7aa8cc"/></radialGradient>
<radialGradient id="ogr" cx="0.35" cy="0.3" r="0.8"><stop offset="0" stop-color="#b8f0b0"/><stop offset="0.5" stop-color="#2ca02c"/><stop offset="1" stop-color="#0c6a14"/></radialGradient></defs>
<rect x="2.6" y="5.4" width="17.4" height="15.6" fill="url(#og)" stroke="#4a7aa4" stroke-width="0.9"/>
<circle cx="7.8" cy="4.4" r="3.4" fill="url(#ob)" stroke="#5a8ab4" stroke-width="0.7"/>
<circle cx="7.8" cy="22.6" r="3.4" fill="url(#ob)" stroke="#5a8ab4" stroke-width="0.7"/>
<circle cx="7.6" cy="13.6" r="3.5" fill="url(#ogr)"/>
<path d="M10.6 10.6 L13.4 9.6 L15 13.2 Q19 7.5 27.6 3.2 L27 7.6 Q20 11 15.4 17.8 L13.2 17.4Z" fill="#e81010"/>
<path d="M10.6 10.6 L13.4 9.6 L15 13.2 L14.4 15.2Z" fill="#b00808"/></svg>
<svg class="a" style="left:52px;top:1222px" width="16" height="16.5" ><defs><linearGradient id="sg" x1="0" y1="0" x2="1" y2="1"><stop offset="0" stop-color="#9fd6b0"/><stop offset="0.5" stop-color="#4aaa70"/><stop offset="1" stop-color="#338a55"/></linearGradient></defs>
<path d="M8 0.6 Q11.5 2.6 15.2 2.8 Q15.8 10.5 8 15.6 Q0.2 10.5 0.8 2.8 Q4.5 2.6 8 0.6Z" fill="url(#sg)" stroke="#8f9a94" stroke-width="1.4"/>
<path d="M4.2 8 L7 10.8 L11.8 5.4" fill="none" stroke="#eafff0" stroke-width="1.7"/></svg><svg class="a" style="left:17px;top:1256px" width="28" height="18" ><g stroke="#8aa6c8" stroke-width="1.6" fill="none" stroke-linecap="round"><path d="M2.5 6.6 H20.5 Q24 6.6 23.4 3.4"/><path d="M2.5 10.4 H19"/></g><circle cx="19" cy="13" r="2.2" fill="#6f94bf"/><circle cx="23" cy="5" r="2" fill="#8aa6c8"/></svg>
<div class="a" style="left:30.3px;top:1247.2px;width:15.6px;height:15.6px;border-radius:50%;background:#c42b1c"></div>
<div class="t" style="left:35.4px;top:1249.5px;color:#fff;font-size:11px">1</div>
<div class="t ui" style="left:51px;top:1252px;color:#1a1a1a;font-size:11.5px;letter-spacing:-0.2px">13°C</div>
<div class="t ui" style="left:51px;top:1268px;color:#5a5a5a;font-size:11.5px;letter-spacing:0.3px">Windy</div>
<svg class="a" style="left:705px;top:1254px" width="23" height="23" ><defs><linearGradient id="wl" x1="0" y1="0" x2="1" y2="1"><stop offset="0" stop-color="#4cc2f4"/><stop offset="1" stop-color="#0a6fd6"/></linearGradient></defs>
<path d="M0 0 H11 V11 H0Z M12 0 H23 V11 H12Z M0 12 H11 V23 H0Z M12 12 H23 V23 H12Z" fill="url(#wl)"/></svg>
<div class="a" style="left:741.5px;top:1250px;width:219px;height:30.5px;border-radius:15.5px;background:#f2f5fd;border:1px solid #cbd3e6;overflow:hidden"></div>
<svg class="a" style="left:751px;top:1256px" width="18" height="18" ><circle cx="7.6" cy="7.6" r="5.2" fill="none" stroke="#1a1a1a" stroke-width="1.5"/><path d="M11.4 11.6 L15.2 15.6" stroke="#1a1a1a" stroke-width="1.7" stroke-linecap="round"/></svg>
<div class="t ui" style="left:778.5px;top:1258px;color:#5c5c5c;font-size:13.2px;letter-spacing:-0.15px">Search</div>
<svg class="a" style="left:908px;top:1250px" width="54" height="31" ><defs><clipPath id="rc"><path d="M-2 0.6 H38 A14.6 14.6 0 0 1 38 29.9 H-2Z"/></clipPath>
<linearGradient id="rp" x1="0" y1="0.2" x2="1" y2="0.8"><stop offset="0" stop-color="#d2187a"/><stop offset="0.45" stop-color="#d62a5c"/><stop offset="1" stop-color="#c8542a"/></linearGradient>
<radialGradient id="rs" cx="0.58" cy="0.62" r="0.62"><stop offset="0" stop-color="#141c5c"/><stop offset="0.5" stop-color="#2a3f98"/><stop offset="0.8" stop-color="#7f9ad8" stop-opacity="0.7"/><stop offset="1" stop-color="#f2f5fd" stop-opacity="0"/></radialGradient></defs>
<g clip-path="url(#rc)"><ellipse cx="30" cy="20" rx="32" ry="17" fill="url(#rs)"/>
<circle cx="35" cy="7.2" r="15.6" fill="url(#rp)"/>
<path d="M25 16 Q30 22 45 19" stroke="#f06a8a" stroke-width="0.8" fill="none" opacity="0.6"/>
<path d="M3.4 4.2 Q8.5 4.6 22.6 18.2 L24.2 22.6 L19.6 21.2 Q6.2 10.2 3.4 4.2Z" fill="#c4c7d0"/><path d="M3.4 4.2 Q6.4 9.6 19.6 21.2 L21.2 19.6 Q7 7 3.4 4.2Z" fill="#8e92a4"/>
<path d="M21.6 20.2 L26.4 25.4 L23.4 21.2Z" fill="#8fd0ff"/>
<circle cx="6.6" cy="22.6" r="2.8" fill="#5f7fae"/><circle cx="31" cy="25.6" r="0.7" fill="#fff"/><circle cx="43" cy="25" r="0.7" fill="#fff"/><circle cx="14" cy="26.4" r="0.6" fill="#fff"/><circle cx="20" cy="27.6" r="0.5" fill="#fff"/></g></svg>
<svg class="a" style="left:973px;top:1254px" width="25" height="23" ><defs><linearGradient id="tv" x1="0" y1="0" x2="1" y2="1"><stop offset="0" stop-color="#f4f4f4"/><stop offset="1" stop-color="#c8c8c8"/></linearGradient></defs>
<rect x="0" y="6.2" width="17.6" height="15.6" rx="1.6" fill="#1e1e1e"/><rect x="5.6" y="0.2" width="18" height="15.6" rx="1.6" fill="url(#tv)" opacity="0.95"/></svg>
<svg class="a" style="left:1060px;top:1252px" width="26" height="26" ><defs><linearGradient id="e1" x1="0" y1="0" x2="1" y2="0.3"><stop offset="0" stop-color="#2a9ad8"/><stop offset="0.6" stop-color="#3cc0b0"/><stop offset="1" stop-color="#7ad850"/></linearGradient>
<linearGradient id="e2" x1="0" y1="0" x2="0.6" y2="1"><stop offset="0" stop-color="#1a78c8"/><stop offset="1" stop-color="#0c4a9c"/></linearGradient></defs>
<circle cx="13" cy="13" r="12.2" fill="url(#e1)"/>
<path d="M0.9 14 Q1.5 5.5 10 6.5 Q6 10 8 16 Q10.5 22.5 18 22.6 Q21.5 22.4 23.6 20 Q20 25.6 13 25.2 Q2 24.5 0.9 14Z" fill="url(#e2)"/>
<path d="M8.4 13.6 Q9.5 9.4 14 9.6 Q18 10 17.6 13.4 Q17 15.8 14.8 15.4 Q16.8 18.8 21.6 17.4 Q24.6 16.2 25 12.4 Q25.2 17.5 21 20.6 Q15 23.6 10.6 20 Q8 17.4 8.4 13.6Z" fill="#eef3fb"/>
<path d="M8.4 13.6 Q8 17.4 10.6 20 Q15 23.6 21 20.6 Q22.6 19.6 23.6 18 Q19.5 20.6 15.2 19.2 Q10.2 17.4 10.4 12.6 Q9 12.6 8.4 13.6Z" fill="#1668b8"/></svg>
<div class="a" style="left:1098px;top:1246px;width:38px;height:38.5px;border-radius:4px;background:#eef1fb;border:1px solid #e6eaf6"></div>
<svg class="a" style="left:1105px;top:1253px" width="24" height="24" viewBox="0 0 16 16" ><defs><linearGradient id="agk" x1="0" y1="0" x2="1" y2="0"><stop offset="0" stop-color="#5f7fae"/><stop offset="1" stop-color="#aebfd6"/></linearGradient></defs>
<rect x="0.3" y="0.5" width="15.4" height="15" fill="url(#agk)"/>
<path d="M1 2 Q1 0.4 2.8 0.4 H13.2 Q15 0.4 15 2 V3 Q15 3.8 14.2 4.4 L12.8 5.6 H3.2 L1.8 4.4 Q1 3.8 1 3Z" fill="#05070c"/>
<path d="M1 14 Q1 15.6 2.8 15.6 H13.2 Q15 15.6 15 14 V13 Q15 12.2 14.2 11.6 L12.8 10.4 H3.2 L1.8 11.6 Q1 12.2 1 13Z" fill="#05070c"/>
<path d="M4.2 5.9 H11.8 L10.8 8 L11.8 10.1 H4.2 L5.2 8Z" fill="#1f55a8"/>
<rect x="6.3" y="7.2" width="3.4" height="1.5" rx="0.5" fill="#9fd0f5"/></svg>
<div class="a" style="left:1109.3px;top:1281.3px;width:15.6px;height:3px;border-radius:1.5px;background:#0a6fd0"></div>
<svg class="a" style="left:1149px;top:1253px" width="25" height="25" ><defs><linearGradient id="pt" x1="0" y1="0" x2="1" y2="1"><stop offset="0" stop-color="#3fb8e8"/><stop offset="1" stop-color="#0f7ad0"/></linearGradient></defs>
<path d="M1 12.5 Q1.5 2 12.5 1 Q22.5 0.8 23.5 9 Q23.8 13 20 14.2 Q16.8 15 17.6 18.4 Q18.4 22.6 14.4 23.6 Q11.8 24 10.4 21.4 Q9.6 19.6 7 20 Q1.2 20.6 1 12.5Z" fill="url(#pt)"/>
<circle cx="4.6" cy="12.4" r="1.9" fill="#e0502a"/><circle cx="7.4" cy="6.6" r="1.9" fill="#3fae3a"/><circle cx="13" cy="4.2" r="1.8" fill="#f2c81e"/>
<path d="M13 10.6 L13.7 12.6 L15.7 13.3 L13.7 14 L13 16 L12.3 14 L10.3 13.3 L12.3 12.6Z" fill="#fff"/>
<path d="M17.4 6.2 H21 V10.4 H17.4Z" fill="#e8d0a8"/><path d="M17.8 10.4 H20.6 L20.2 24.4 H18.2Z" fill="#9a5a20"/><path d="M17.2 5.6 H21.2 V7 H17.2Z" fill="#c8a878"/></svg>
<div class="a" style="left:1158.3px;top:1281.3px;width:6px;height:2.6px;border-radius:1.3px;background:#7d8494"></div>
<svg class="a" style="left:1192px;top:1253px" width="26" height="24" ><defs><linearGradient id="fo" x1="0" y1="0" x2="0" y2="1"><stop offset="0" stop-color="#ffd85a"/><stop offset="1" stop-color="#f8c030"/></linearGradient>
<linearGradient id="fb" x1="0" y1="0" x2="0" y2="1"><stop offset="0" stop-color="#2a8ee0"/><stop offset="1" stop-color="#0f6cc4"/></linearGradient></defs>
<path d="M0.8 3 Q0.8 1.2 2.6 1.2 H9 Q10 1.2 10.8 2.2 L12 3.6 H0.8Z" fill="#e0a520"/>
<path d="M0.8 3.4 H23.4 Q24.8 3.4 24.8 4.8 V21 Q24.8 22.6 23.2 22.6 H2.4 Q0.8 22.6 0.8 21Z" fill="url(#fo)"/>
<path d="M6 22.6 V17.6 Q6 15.6 8 15.6 H17.6 Q19.6 15.6 19.6 17.6 V22.6Z" fill="url(#fb)"/>
<path d="M8.4 18.4 H17.2" stroke="#0a58a8" stroke-width="1.2"/></svg>
<div class="a" style="left:1202px;top:1281.3px;width:6px;height:2.6px;border-radius:1.3px;background:#7d8494"></div>
<svg class="a" style="left:1688px;top:1260px" width="14" height="10" ><path d="M1.8 8 L7 2.8 L12.2 8" fill="none" stroke="#1a1a1a" stroke-width="1.3"/></svg>
<div class="t ui" style="left:1722.5px;top:1260.5px;color:#1a1a1a;font-size:11.3px;letter-spacing:-0.75px">FRA</div>
<svg class="a" style="left:1762px;top:1256px" width="18" height="18" ><g fill="none" stroke="#1a1a1a" stroke-width="1.1"><rect x="1.4" y="1.4" width="10.6" height="10.4" rx="1"/><path d="M4.4 14.8 H10.6 M6 12 V14.8 M9 12 V14.8"/><rect x="12.8" y="1" width="3.4" height="5.2" rx="1.2" fill="#dfe9f6"/><path d="M14.5 6.2 V15.6 M12.4 15.2 H15"/><path d="M12.8 3 H16.2"/></g></svg>
<svg class="a" style="left:1786px;top:1257px" width="18" height="16" ><g fill="none" stroke="#1a1a1a" stroke-width="1.1" stroke-linejoin="round"><path d="M1.6 5.6 H3.8 L7.4 2 V13.6 L3.8 10 H1.6Z"/><path d="M9.6 5.4 Q11 7.8 9.6 10.2"/><path d="M11.8 3.6 Q14.2 7.8 11.8 12"/><path d="M14 1.8 Q17.4 7.8 14 13.8"/></g></svg>
<div class="t ui" style="right:43px;top:1251.5px;color:#1a1a1a;font-size:11.3px;letter-spacing:0.05px">13:10</div>
<div class="t ui" style="right:43px;top:1267.5px;color:#1a1a1a;font-size:11.3px;letter-spacing:0.08px">04.10.2024</div>
<svg class="a" style="left:1885px;top:1257px" width="14" height="17" ><path d="M7 0.8 Q11.4 0.8 11.6 6 Q11.7 9.6 13.2 11.4 Q13.6 12.4 12.6 12.4 H1.4 Q0.4 12.4 0.8 11.4 Q2.3 9.6 2.4 6 Q2.6 0.8 7 0.8Z" fill="#0a4ea8"/><path d="M5 13.6 H9 Q8.6 15.6 7 15.6 Q5.4 15.6 5 13.6Z" fill="#0a4ea8"/></svg>
<svg class="a" style="left:1798px;top:213px" width="14" height="14" ><path d="M1.4 6.5 H11.2" stroke="#1a1a1a" stroke-width="1"/></svg>
<svg class="a" style="left:1843px;top:213px" width="13" height="13" ><g fill="none" stroke="#1a1a1a" stroke-width="1"><rect x="1.5" y="3.5" width="7" height="7" rx="1.4"/><path d="M3.6 1.5 H8.4 Q10.5 1.5 10.5 3.6 V8.4"/></g></svg>
<svg class="a" style="left:1889px;top:213px" width="13" height="13" ><path d="M1.2 1.2 L11 11 M11 1.2 L1.2 11" stroke="#1a1a1a" stroke-width="1.05"/></svg><div class="a" style="left:1596px;top:927px;width:18px;height:15px;background:#fff;border:1px solid #d4d4d8;border-radius:3px"></div>
<svg class="a" style="left:1596px;top:927px" width="18" height="15" ><g fill="#3f6f8e"><path d="M8.2 2.8 Q4.2 4.4 2.8 7.5 Q4.2 10.6 8.2 12.2 Q6.9 11 6.6 7.5 Q6.9 4 8.2 2.8Z"/><path d="M14.8 2.8 Q10.8 4.4 9.4 7.5 Q10.8 10.6 14.8 12.2 Q13.5 11 13.2 7.5 Q13.5 4 14.8 2.8Z"/></g></svg>
<div class="a" style="left:1598px;top:950px;width:17.6px;height:24px;background:#fff;border:1px solid #d4d4d8;border-radius:3px"></div>
<svg class="a" style="left:1598px;top:950px" width="18" height="24" ><g fill="#3f6f8e"><path d="M2.8 4.6 L8.6 7.6 L14.4 4.6 V7.6 L8.6 11.4 L2.8 7.6Z"/><path d="M2.8 11.8 L8.6 14.8 L14.4 11.8 V14.8 L8.6 18.6 L2.8 14.8Z"/></g></svg>
</body></html>
